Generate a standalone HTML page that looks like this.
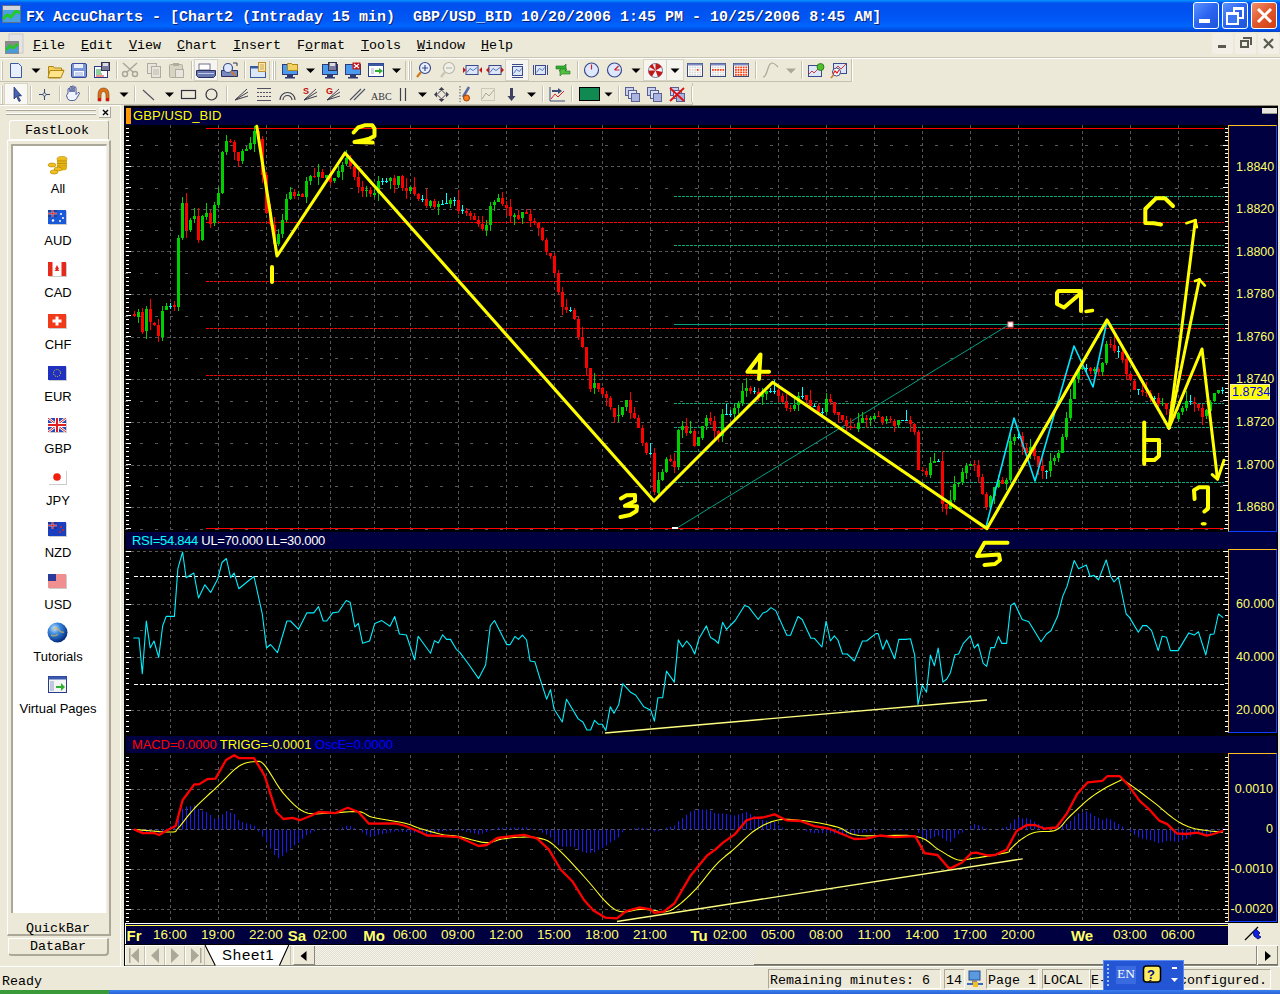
<!DOCTYPE html>
<html><head><meta charset="utf-8">
<style>
*{margin:0;padding:0;box-sizing:border-box}
html,body{width:1280px;height:994px;overflow:hidden;background:#ECE9D8;position:relative;font-family:"Liberation Sans",sans-serif}
.a{position:absolute}
.mono{font-family:"Liberation Mono",monospace}
#title{left:0;top:0;width:1280px;height:32px;background:linear-gradient(to bottom,#0997ff 0px,#0053ee 3px,#0050ee 6px,#0058f5 20px,#0066ff 26px,#0047d8 31px,#003dc8 32px)}
#ttext{left:26px;top:9px;color:#fff;font:bold 15px "Liberation Mono",monospace;white-space:pre;text-shadow:1px 1px 0 #0a1e6e;letter-spacing:0px}
.wbtn{top:2px;width:26px;height:27px;border:1px solid #fff;border-radius:3px;background:linear-gradient(135deg,#5b92ff 0%,#2a64f0 50%,#1f54d8 100%)}
.menu{top:38px;font:13.33px "Liberation Mono",monospace;color:#000;white-space:pre}
.menu u{text-decoration:underline}
.mdib{top:33px;width:21px;height:21px;background:#f1efe6;border-radius:2px}
.sep{width:1px;background:#c5c2b2;border-right:1px solid #fff}
.lbl{font:13px "Liberation Sans",sans-serif;color:#000;text-align:center;width:120px;left:-2px}
.status{font:13.33px "Liberation Mono",monospace;color:#000;white-space:pre;margin-top:2px}
.sbox{top:969px;height:20px;border-top:1px solid #aca899;border-left:1px solid #aca899;border-right:1px solid #fff;border-bottom:1px solid #fff}
.tl{font:13.5px "Liberation Sans",sans-serif;color:#ffff66;white-space:pre;top:927px}
.tlb{font:bold 15px "Liberation Sans",sans-serif;color:#ffff66;white-space:pre;top:927px}
.ax{font:12.5px "Liberation Sans",sans-serif;color:#ffff66;white-space:pre}
</style></head><body>
<!-- title bar -->
<div id="title" class="a"></div>
<svg class="a" style="left:2px;top:5px" width="20" height="19" viewBox="0 0 20 19">
 <rect x="0" y="0" width="19" height="18" fill="#5f6f8a"/>
 <rect x="1" y="5" width="17" height="12" fill="#4aa0e0"/>
 <polyline points="1,14 5,10 9,12 14,6 18,8" stroke="#22cc22" stroke-width="3" fill="none"/>
 <rect x="1" y="1" width="17" height="4" fill="#cfd6de"/>
</svg>
<div id="ttext" class="a">FX AccuCharts - [Chart2 (Intraday 15 min)  GBP/USD_BID 10/20/2006 1:45 PM - 10/25/2006 8:45 AM]</div>
<div class="a wbtn" style="left:1193px"><div class="a" style="left:5px;top:16px;width:11px;height:4px;background:#fff"></div></div>
<div class="a wbtn" style="left:1222px"><div class="a" style="left:10px;top:4px;width:11px;height:12px;border:2px solid #fff;border-top-width:3px"></div><div class="a" style="left:3px;top:9px;width:13px;height:13px;border:2px solid #fff;border-top-width:3px;background:#3d74f2"></div></div>
<div class="a wbtn" style="left:1251px;background:linear-gradient(135deg,#f0906c 0%,#e0572c 50%,#cf3d10 100%)">
 <svg class="a" style="left:3px;top:3px" width="19" height="19"><path d="M3,3 L16,16 M16,3 L3,16" stroke="#fff" stroke-width="3"/></svg></div>

<!-- menu bar -->
<svg class="a" style="left:4px;top:33px" width="21" height="22" viewBox="0 0 21 22">
 <rect x="5" y="1" width="14" height="19" fill="#e4e4e4" stroke="#c8c8c8"/>
 <rect x="1" y="8" width="14" height="13" fill="#8a8a8a"/>
 <rect x="2" y="13" width="12" height="7" fill="#4a9ad8"/>
 <polyline points="2,17 6,13 9,15 14,11" stroke="#30c030" stroke-width="3" fill="none"/>
</svg>
<div class="a menu" style="left:33px"><u>F</u>ile</div>
<div class="a menu" style="left:81px"><u>E</u>dit</div>
<div class="a menu" style="left:129px"><u>V</u>iew</div>
<div class="a menu" style="left:177px"><u>C</u>hart</div>
<div class="a menu" style="left:233px"><u>I</u>nsert</div>
<div class="a menu" style="left:297px">F<u>o</u>rmat</div>
<div class="a menu" style="left:361px"><u>T</u>ools</div>
<div class="a menu" style="left:417px"><u>W</u>indow</div>
<div class="a menu" style="left:481px"><u>H</u>elp</div>
<div class="a mdib" style="left:1212px"><div class="a" style="left:6px;top:12px;width:8px;height:3px;background:#5a5a50"></div></div>
<div class="a mdib" style="left:1235px"><div class="a" style="left:8px;top:4px;width:9px;height:8px;border:2px solid #5a5a50;border-width:2px 2px 0 0"></div><div class="a" style="left:5px;top:7px;width:9px;height:8px;border:2px solid #5a5a50"></div></div>
<div class="a mdib" style="left:1258px"><svg class="a" style="left:5px;top:5px" width="11" height="11"><path d="M1,1 L10,10 M10,1 L1,10" stroke="#5a5a50" stroke-width="2.2"/></svg></div>
<div class="a" style="left:0;top:57px;width:1280px;height:1px;background:#c8c5b5"></div>
<div class="a" style="left:0;top:58px;width:1280px;height:1px;background:#fff"></div>

<!-- toolbars -->
<div class="a" style="left:0;top:59px;width:852px;height:23px;background:#ECE9D8;border-bottom:1px solid #c4c1b0"></div>
<div class="a" style="left:0;top:83px;width:693px;height:22px;background:#ECE9D8;border-bottom:1px solid #c4c1b0"></div>
<svg class="a" style="left:0;top:0" width="1280" height="110"><defs><pattern id="chk" width="2" height="2" patternUnits="userSpaceOnUse"><rect width="1" height="1" fill="#fff"/><rect x="1" y="1" width="1" height="1" fill="#fff"/></pattern></defs><rect x="851" y="59" width="1" height="23" fill="#c4c1b0"/><rect x="852" y="59" width="1" height="23" fill="#fff"/>
<rect x="692" y="83" width="1" height="22" fill="#c4c1b0"/>
<rect x="1" y="61" width="1" height="19" fill="#fff"/><rect x="2" y="61" width="1" height="19" fill="#c5c2b2"/>
<rect x="1" y="85" width="1" height="19" fill="#fff"/><rect x="2" y="85" width="1" height="19" fill="#c5c2b2"/>
<path d="M10.5,63.5 h8 l3,3 v11 h-11 z" fill="#e8f0ff" stroke="#3a5aa0"/>
<path d="M31.5,68.5 h9 l-4.5,4.5 z" fill="#000"/>
<path d="M48.5,66.5 h5 l1,1.5 h7 v2 h2 l-3,8 h-12 z" fill="#f4d060" stroke="#b08818"/><path d="M50,70.5 h14 l-3,7 h-13 z" fill="#ffe48a" stroke="#b08818"/>
<rect x="71.5" y="63.5" width="15" height="14" rx="1.5" fill="#7a96d8" stroke="#3a4a9a"/><rect x="74" y="64" width="9" height="4" fill="#e8eef8"/><rect x="74" y="71" width="10" height="5" fill="#fff"/><path d="M75,73 h8 M75,75 h8" stroke="#7a96d8" stroke-width="0.8"/>
<rect x="94.5" y="66.5" width="13" height="11" fill="#fff" stroke="#2a3a8a"/><path d="M96,70 h6 M96,72 h5 M96,74 h6" stroke="#20a040" stroke-width="1"/><path d="M96,76 h8" stroke="#e02020"/><rect x="101.5" y="62.5" width="8" height="8" fill="#7a7aa0" stroke="#303050"/><rect x="103" y="63" width="5" height="3" fill="#ddd"/>
<rect x="116" y="61" width="1" height="18" fill="#c5c2b2"/><rect x="117" y="61" width="1" height="18" fill="#fff"/>
<g stroke="#aaa69a" stroke-width="1.5" fill="none"><circle cx="125" cy="74" r="2.5"/><circle cx="135" cy="74" r="2.5"/><path d="M127,72 L137,63 M133,72 L123,63"/></g>
<rect x="147.5" y="63.5" width="9" height="10" fill="#e8e6dc" stroke="#b0ada0"/><rect x="151.5" y="66.5" width="9" height="11" fill="#e8e6dc" stroke="#b0ada0"/><path d="M153,70 h6 M153,72 h6 M153,74 h6" stroke="#b0ada0" stroke-width="0.8"/>
<rect x="169.5" y="64.5" width="13" height="13" rx="1" fill="#d8d4c4" stroke="#b0ada0"/><rect x="173" y="63" width="6" height="3" fill="#b0ada0"/><rect x="175.5" y="69.5" width="8" height="8" fill="#e8e6dc" stroke="#b0ada0"/>
<rect x="191" y="61" width="1" height="18" fill="#c5c2b2"/><rect x="192" y="61" width="1" height="18" fill="#fff"/>
<rect x="194.5" y="59.5" width="23.0" height="21.0" fill="#f6f5f0" stroke="#d8d4c4" stroke-width="1"/>
<rect x="199" y="64" width="11" height="6" fill="#fff" stroke="#505070" stroke-width="0.8"/><path d="M196.5,70.5 h19 v5 l-2,2 h-15 l-2,-2 z" fill="#6a78b0" stroke="#2a3060"/><path d="M198,73.5 h16" stroke="#c0c8f0" stroke-width="1"/>
<path d="M221.5,70.5 h16 v6 h-16 z" fill="#7a8ac0" stroke="#2a3060"/><circle cx="228" cy="68" r="4.5" fill="#dde8ff" stroke="#3a4a8a" stroke-width="1.2"/><path d="M231,71 L235,76" stroke="#d07a20" stroke-width="2"/><path d="M233,63 h4 v3" stroke="#303050" stroke-width="1" fill="none"/>
<rect x="244" y="61" width="1" height="18" fill="#c5c2b2"/><rect x="245" y="61" width="1" height="18" fill="#fff"/>
<rect x="250.5" y="66.5" width="15" height="11" fill="#dbe6f8" stroke="#3a5aa0"/><rect x="250.5" y="66.5" width="15" height="2" fill="#3a5aa0"/><rect x="258.5" y="62.5" width="7" height="9" fill="#f8e8b0" stroke="#c09030"/><path d="M260,65 h4 M260,67 h4 M260,69 h4" stroke="#c09030" stroke-width="0.8"/>
<rect x="269" y="61" width="1" height="19" fill="#c5c2b2"/>
<rect x="272" y="61" width="1" height="19" fill="#fff"/><rect x="273" y="61" width="1" height="19" fill="#c5c2b2"/>
<rect x="274" y="61" width="1" height="19" fill="#fff"/><rect x="275" y="61" width="1" height="19" fill="#c5c2b2"/>
<rect x="282.5" y="64.5" width="15" height="10" fill="#4a9af0" stroke="#303a70"/><rect x="287" y="75" width="6" height="2" fill="#303a70"/><rect x="285" y="77" width="10" height="1.5" fill="#303a70"/>
<path d="M287.5,63.5 h4 l1,1 h5 v6 h-10 z" fill="#f4d060" stroke="#b08818"/>
<path d="M306.0,68.5 h9 l-4.5,4.5 z" fill="#000"/>
<rect x="322.5" y="64.5" width="15" height="10" fill="#4a9af0" stroke="#303a70"/><rect x="327" y="75" width="6" height="2" fill="#303a70"/><rect x="325" y="77" width="10" height="1.5" fill="#303a70"/>
<rect x="328.5" y="62.5" width="8" height="8" fill="#7a7aa0" stroke="#303050"/><rect x="330" y="63" width="5" height="3" fill="#ddd"/>
<rect x="345.5" y="64.5" width="15" height="10" fill="#4a9af0" stroke="#303a70"/><rect x="350" y="75" width="6" height="2" fill="#303a70"/><rect x="348" y="77" width="10" height="1.5" fill="#303a70"/>
<rect x="352.5" y="62.5" width="8" height="7" fill="#c01818"/><path d="M354,64 l5,4 M359,64 l-5,4" stroke="#fff" stroke-width="1.2"/>
<rect x="368.5" y="63.5" width="15" height="13" fill="#fff" stroke="#2a3a8a"/><rect x="368.5" y="63.5" width="15" height="2.5" fill="#3a5aa0"/><path d="M371,69 h3 M371,71 h3 M371,73 h3" stroke="#8a9ac0" stroke-width="0.8"/><path d="M375,70 h4 v-2 l4,3 l-4,3 v-2 h-4 z" fill="#30b030"/>
<path d="M392.0,68.5 h9 l-4.5,4.5 z" fill="#000"/>
<rect x="405" y="61" width="1" height="19" fill="#c5c2b2"/>
<rect x="408" y="61" width="1" height="19" fill="#fff"/><rect x="409" y="61" width="1" height="19" fill="#c5c2b2"/>
<rect x="410" y="61" width="1" height="19" fill="#fff"/><rect x="411" y="61" width="1" height="19" fill="#c5c2b2"/>
<circle cx="425" cy="68" r="5.5" fill="#e8f0ff" stroke="#3a4a8a" stroke-width="1.2"/><path d="M422,68 h6 M425,65 v6" stroke="#3a4a8a" stroke-width="1.2"/><path d="M421,72 L417,77" stroke="#d07a20" stroke-width="2.2"/>
<circle cx="449" cy="68" r="5.5" fill="#f0efe8" stroke="#b8b5a8" stroke-width="1.2"/><path d="M446,68 h6" stroke="#b8b5a8" stroke-width="1.2"/><path d="M445,72 L441,77" stroke="#c8c5b8" stroke-width="2.2"/>
<rect x="466" y="65.5" width="12" height="9" fill="#dce8fa" stroke="#3a4a8a"/><polyline points="467,72.5 470,68.5 473,70.5 477,67.5" fill="none" stroke="#4a6ab0" stroke-width="0.9"/>
<path d="M463,67 l3,3 l-3,3 z M482,67 l-3,3 l3,3 z" fill="#c01818"/>
<rect x="489" y="65.5" width="12" height="9" fill="#dce8fa" stroke="#3a4a8a"/><polyline points="490,72.5 493,68.5 496,70.5 500,67.5" fill="none" stroke="#4a6ab0" stroke-width="0.9"/>
<path d="M489,67 l-3,3 l3,3 z M501,67 l3,3 l-3,3 z" fill="#c01818"/>
<rect x="505.5" y="59.5" width="23.0" height="21.0" fill="#f6f5f0" stroke="#d8d4c4" stroke-width="1"/>
<rect x="512.5" y="66.5" width="10" height="9" fill="#dce8fa" stroke="#3a4a8a"/><polyline points="513.5,73.5 516.5,69.5 519.5,71.5 521.5,68.5" fill="none" stroke="#4a6ab0" stroke-width="0.9"/>
<path d="M512,64.5 h11 M512,77.5 h11" stroke="#3a4a8a" stroke-width="1"/>
<rect x="535.5" y="65.5" width="10" height="9" fill="#dce8fa" stroke="#3a4a8a"/><polyline points="536.5,72.5 539.5,68.5 542.5,70.5 544.5,67.5" fill="none" stroke="#4a6ab0" stroke-width="0.9"/>
<path d="M533.5,65 v10 M547.5,65 v10" stroke="#3a4a8a" stroke-width="1"/>
<path d="M556,66 h8 l2,-2 v7 h-7 l2,-2 h-5 z" fill="#30b030" stroke="#207020" stroke-width="0.6"/><path d="M570,74 h-8 l-2,2 v-7 h7 l-2,2 h5 z" fill="#50c040" stroke="#207020" stroke-width="0.6"/>
<rect x="577" y="61" width="1" height="18" fill="#c5c2b2"/><rect x="578" y="61" width="1" height="18" fill="#fff"/>
<circle cx="591.5" cy="70" r="7" fill="#dde8ff" stroke="#3a4a8a" stroke-width="1.2"/><path d="M591.5,64.5 v5" stroke="#d02020" stroke-width="1.2"/>
<circle cx="614.5" cy="70" r="7" fill="#dde8ff" stroke="#3a4a8a" stroke-width="1.2"/><path d="M614.5,70 l4,-4 M614.5,70 h5" stroke="#d02020" stroke-width="1.2"/>
<path d="M631.5,68.5 h9 l-4.5,4.5 z" fill="#000"/>
<rect x="643.5" y="59.5" width="23.0" height="21.0" fill="#f6f5f0" stroke="#d8d4c4" stroke-width="1"/>
<circle cx="655.5" cy="70.5" r="7" fill="#f0f0f8" stroke="#5a5a7a" stroke-width="0.8"/><path d="M655.5,70.5 L655.5,63.5 A7,7 0 0,1 661.6,67 Z M655.5,70.5 L662.5,72 A7,7 0 0,1 658,77 Z M655.5,70.5 L652,76.6 A7,7 0 0,1 648.5,70.5 Z M655.5,70.5 L649.4,67 A7,7 0 0,1 652.5,64 Z" fill="#c01818"/>
<rect x="666.5" y="59.5" width="17.0" height="21.0" fill="#f6f5f0" stroke="#d8d4c4" stroke-width="1"/>
<path d="M670.5,68.5 h9 l-4.5,4.5 z" fill="#000"/>
<rect x="687.5" y="63.5" width="15" height="13" fill="#fff" stroke="#3a4a7a"/><rect x="687.5" y="63.5" width="15" height="2" fill="#7a8ac0"/>
<rect x="689.0" y="66.5" width="1.8" height="1.8" fill="#d8d8d8"/>
<rect x="691.6" y="66.5" width="1.8" height="1.8" fill="#d8d8d8"/>
<rect x="694.2" y="66.5" width="1.8" height="1.8" fill="#d8d8d8"/>
<rect x="696.8" y="66.5" width="1.8" height="1.8" fill="#d8d8d8"/>
<rect x="699.4" y="66.5" width="1.8" height="1.8" fill="#d8d8d8"/>
<rect x="689.0" y="69.0" width="1.8" height="1.8" fill="#d8d8d8"/>
<rect x="691.6" y="69.0" width="1.8" height="1.8" fill="#d8d8d8"/>
<rect x="694.2" y="69.0" width="1.8" height="1.8" fill="#d8d8d8"/>
<rect x="696.8" y="69.0" width="1.8" height="1.8" fill="#ff4010"/>
<rect x="699.4" y="69.0" width="1.8" height="1.8" fill="#d8d8d8"/>
<rect x="689.0" y="71.5" width="1.8" height="1.8" fill="#d8d8d8"/>
<rect x="691.6" y="71.5" width="1.8" height="1.8" fill="#d8d8d8"/>
<rect x="694.2" y="71.5" width="1.8" height="1.8" fill="#d8d8d8"/>
<rect x="696.8" y="71.5" width="1.8" height="1.8" fill="#d8d8d8"/>
<rect x="699.4" y="71.5" width="1.8" height="1.8" fill="#d8d8d8"/>
<rect x="689.0" y="74.0" width="1.8" height="1.8" fill="#d8d8d8"/>
<rect x="691.6" y="74.0" width="1.8" height="1.8" fill="#d8d8d8"/>
<rect x="694.2" y="74.0" width="1.8" height="1.8" fill="#d8d8d8"/>
<rect x="696.8" y="74.0" width="1.8" height="1.8" fill="#d8d8d8"/>
<rect x="699.4" y="74.0" width="1.8" height="1.8" fill="#d8d8d8"/>
<rect x="710.5" y="63.5" width="15" height="13" fill="#fff" stroke="#3a4a7a"/><rect x="710.5" y="63.5" width="15" height="2" fill="#7a8ac0"/>
<rect x="712.0" y="66.5" width="1.8" height="1.8" fill="#d8d8d8"/>
<rect x="714.6" y="66.5" width="1.8" height="1.8" fill="#d8d8d8"/>
<rect x="717.2" y="66.5" width="1.8" height="1.8" fill="#d8d8d8"/>
<rect x="719.8" y="66.5" width="1.8" height="1.8" fill="#d8d8d8"/>
<rect x="722.4" y="66.5" width="1.8" height="1.8" fill="#d8d8d8"/>
<rect x="712.0" y="69.0" width="1.8" height="1.8" fill="#ff4010"/>
<rect x="714.6" y="69.0" width="1.8" height="1.8" fill="#ff4010"/>
<rect x="717.2" y="69.0" width="1.8" height="1.8" fill="#ff4010"/>
<rect x="719.8" y="69.0" width="1.8" height="1.8" fill="#ff4010"/>
<rect x="722.4" y="69.0" width="1.8" height="1.8" fill="#ff4010"/>
<rect x="712.0" y="71.5" width="1.8" height="1.8" fill="#d8d8d8"/>
<rect x="714.6" y="71.5" width="1.8" height="1.8" fill="#d8d8d8"/>
<rect x="717.2" y="71.5" width="1.8" height="1.8" fill="#d8d8d8"/>
<rect x="719.8" y="71.5" width="1.8" height="1.8" fill="#d8d8d8"/>
<rect x="722.4" y="71.5" width="1.8" height="1.8" fill="#d8d8d8"/>
<rect x="712.0" y="74.0" width="1.8" height="1.8" fill="#d8d8d8"/>
<rect x="714.6" y="74.0" width="1.8" height="1.8" fill="#d8d8d8"/>
<rect x="717.2" y="74.0" width="1.8" height="1.8" fill="#d8d8d8"/>
<rect x="719.8" y="74.0" width="1.8" height="1.8" fill="#d8d8d8"/>
<rect x="722.4" y="74.0" width="1.8" height="1.8" fill="#d8d8d8"/>
<rect x="733.5" y="63.5" width="15" height="13" fill="#fff" stroke="#3a4a7a"/><rect x="733.5" y="63.5" width="15" height="2" fill="#7a8ac0"/>
<rect x="735.0" y="66.5" width="1.8" height="1.8" fill="#ff4010"/>
<rect x="737.6" y="66.5" width="1.8" height="1.8" fill="#ff4010"/>
<rect x="740.2" y="66.5" width="1.8" height="1.8" fill="#ff4010"/>
<rect x="742.8" y="66.5" width="1.8" height="1.8" fill="#ff4010"/>
<rect x="745.4" y="66.5" width="1.8" height="1.8" fill="#ff4010"/>
<rect x="735.0" y="69.0" width="1.8" height="1.8" fill="#ff4010"/>
<rect x="737.6" y="69.0" width="1.8" height="1.8" fill="#ff4010"/>
<rect x="740.2" y="69.0" width="1.8" height="1.8" fill="#ff4010"/>
<rect x="742.8" y="69.0" width="1.8" height="1.8" fill="#ff4010"/>
<rect x="745.4" y="69.0" width="1.8" height="1.8" fill="#ff4010"/>
<rect x="735.0" y="71.5" width="1.8" height="1.8" fill="#ff4010"/>
<rect x="737.6" y="71.5" width="1.8" height="1.8" fill="#ff4010"/>
<rect x="740.2" y="71.5" width="1.8" height="1.8" fill="#ff4010"/>
<rect x="742.8" y="71.5" width="1.8" height="1.8" fill="#ff4010"/>
<rect x="745.4" y="71.5" width="1.8" height="1.8" fill="#ff4010"/>
<rect x="735.0" y="74.0" width="1.8" height="1.8" fill="#ff4010"/>
<rect x="737.6" y="74.0" width="1.8" height="1.8" fill="#ff4010"/>
<rect x="740.2" y="74.0" width="1.8" height="1.8" fill="#ff4010"/>
<rect x="742.8" y="74.0" width="1.8" height="1.8" fill="#ff4010"/>
<rect x="745.4" y="74.0" width="1.8" height="1.8" fill="#ff4010"/>
<rect x="755" y="61" width="1" height="18" fill="#c5c2b2"/><rect x="756" y="61" width="1" height="18" fill="#fff"/>
<path d="M763,77 C768,77 767,63 772,63 C775,63 777,66 778,67" stroke="#aaa69a" stroke-width="1.2" fill="none"/>
<path d="M786.0,68.5 h10 l-5.0,5.0 z" fill="#aca899"/>
<rect x="801" y="61" width="1" height="18" fill="#c5c2b2"/><rect x="802" y="61" width="1" height="18" fill="#fff"/>
<rect x="808.5" y="65.5" width="13" height="11" fill="#dce8fa" stroke="#3a4a8a"/><polyline points="809,74 812,71 814,73 818,69" fill="none" stroke="#e02020" stroke-width="0.9"/><circle cx="820.5" cy="67" r="3.5" fill="#50c030" stroke="#207010" stroke-width="0.8"/>
<rect x="833.5" y="63.5" width="13" height="10" fill="#dce8fa" stroke="#3a4a8a"/><polyline points="834,70 838,66 841,69 846,64" fill="none" stroke="#e02020" stroke-width="0.9"/><circle cx="836.5" cy="72" r="4" fill="#fff" stroke="#3a4a8a" stroke-width="1"/><path d="M833,74 l2,-3 l2,2 l2,-3" stroke="#e02020" stroke-width="1.2" fill="none"/><path d="M833.5,75 L831,78" stroke="#d07a20" stroke-width="1.5"/>
<rect x="4.5" y="83.5" width="23.0" height="21.0" fill="#f6f5f0" stroke="#d8d4c4" stroke-width="1"/>
<rect x="5" y="84" width="22" height="20" fill="url(#chk)" opacity="0.6"/>
<path d="M14,87 v12 l2.5,-2.5 l2.5,5 l1.5,-0.8 l-2.5,-4.8 h3.5 z" fill="#4a60b0" stroke="#1a2a60" stroke-width="0.7"/>
<rect x="30" y="86" width="1" height="16" fill="#c5c2b2"/><rect x="31" y="86" width="1" height="16" fill="#fff"/>
<path d="M39,94.5 h11 M44.5,89 v11" stroke="#3a4a7a" stroke-width="1.1"/><circle cx="44.5" cy="94.5" r="1.6" fill="#ECE9D8" stroke="#3a4a7a" stroke-width="0.8"/>
<rect x="59" y="86" width="1" height="16" fill="#c5c2b2"/><rect x="60" y="86" width="1" height="16" fill="#fff"/>
<path d="M68,93 v-4 q1,-1.5 2,0 v3 v-5 q1,-1.5 2,0 v5 v-5.5 q1,-1.5 2,0 v5.5 v-4.5 q1,-1.5 2,0 v7 l2,-2 q1.5,-0.5 1.5,1 l-3,5 q-1,2 -3,2 h-3 q-2,0 -3,-2 l-1,-3 z" fill="#f0f4ff" stroke="#3a4a8a" stroke-width="0.9"/>
<rect x="88" y="86" width="1" height="16" fill="#c5c2b2"/><rect x="89" y="86" width="1" height="16" fill="#fff"/>
<path d="M98,101 v-6 q0,-7 5.5,-7 q5.5,0 5.5,7 v6 h-3 v-6 q0,-3.5 -2.5,-3.5 q-2.5,0 -2.5,3.5 v6 z" fill="#e07010" stroke="#704010" stroke-width="0.6"/><rect x="98" y="98" width="3" height="3" fill="#e01010"/><rect x="106" y="98" width="3" height="3" fill="#e01010"/>
<path d="M119.5,92.5 h9 l-4.5,4.5 z" fill="#000"/>
<rect x="134" y="86" width="1" height="16" fill="#c5c2b2"/><rect x="135" y="86" width="1" height="16" fill="#fff"/>
<path d="M143,90 L154,100" stroke="#505060" stroke-width="1.1"/>
<path d="M165.0,92.5 h9 l-4.5,4.5 z" fill="#000"/>
<rect x="181.5" y="90.5" width="14" height="8" fill="none" stroke="#303040" stroke-width="1.2"/>
<circle cx="211.5" cy="94.5" r="5.5" fill="none" stroke="#303040" stroke-width="1.2"/>
<rect x="226" y="86" width="1" height="16" fill="#c5c2b2"/><rect x="227" y="86" width="1" height="16" fill="#fff"/>
<path d="M235,100 L247,89 M235,100 L248,92 M235,100 L248,96" stroke="#404050" stroke-width="1"/>
<path d="M257,88.5 h14 M257,92.5 h14 M257,96.5 h14 M257,100.5 h14" stroke="#505060" stroke-width="1" stroke-dasharray="2,1"/><path d="M257,88.5 h14 M257,100.5 h14" stroke="#505060" stroke-width="1"/>
<path d="M280,100 A7.5,7.5 0 0,1 295,100 M283,100 A4.5,4.5 0 0,1 292,100" stroke="#404050" stroke-width="1.2" fill="none"/>
<path d="M304,100 L316,89 M304,100 L317,92 M304,100 L317,96" stroke="#404050" stroke-width="1"/>
<text x="303" y="94" font-family="Liberation Sans" font-weight="bold" font-size="9" fill="#c01010">S</text>
<path d="M327,100 L339,89 M327,100 L340,92 M327,100 L340,96" stroke="#404050" stroke-width="1"/>
<text x="326" y="94" font-family="Liberation Sans" font-weight="bold" font-size="9" fill="#c01010">G</text>
<path d="M350,100 L361,89 M354,100 L365,89" stroke="#505060" stroke-width="1.1"/>
<text x="371" y="100" font-family="Liberation Serif" font-size="10" fill="#303040">ABC</text>
<path d="M400.5,88 v13 M405.5,88 v13" stroke="#404050" stroke-width="1.2"/>
<path d="M418.0,92.5 h9 l-4.5,4.5 z" fill="#000"/>
<path d="M441.5,87 l3,3 h-6 z M441.5,102 l3,-3 h-6 z M434,94.5 l3,-3 v6 z M449,94.5 l-3,-3 v6 z" fill="#404050"/><path d="M441.5,90 l4.5,4.5 l-4.5,4.5 l-4.5,-4.5 z" fill="none" stroke="#404050"/>
<path d="M460,86 v16" stroke="#505060" stroke-dasharray="1.5,1.5"/><path d="M469,87 L463,97" stroke="#5a6aa0" stroke-width="2.5"/><circle cx="466.5" cy="98" r="3" fill="#ff8020" stroke="#a04000"/>
<rect x="481.5" y="88.5" width="13" height="12" fill="none" stroke="#aca899" stroke-dasharray="1,1"/><polyline points="482,99 486,93 489,96 494,90" fill="none" stroke="#aca899"/>
<path d="M510,88 v8 h-2.5 l4,5 l4,-5 h-2.5 v-8 z" fill="#404060"/>
<path d="M527.0,92.5 h9 l-4.5,4.5 z" fill="#000"/>
<rect x="542" y="86" width="1" height="16" fill="#c5c2b2"/><rect x="543" y="86" width="1" height="16" fill="#fff"/>
<path d="M550,87 v14 h15" stroke="#3a4a7a" stroke-width="1" fill="none"/><polyline points="551,99 555,94 558,97 564,91" fill="none" stroke="#e02020" stroke-width="1"/><path d="M552,90 h6 v-2 l4,3 l-4,3 v-2 h-6 z" fill="#3a4a7a"/>
<rect x="571" y="86" width="1" height="16" fill="#c5c2b2"/><rect x="572" y="86" width="1" height="16" fill="#fff"/>
<rect x="579.5" y="87.5" width="20" height="13" fill="#108a50" stroke="#000" stroke-width="1"/>
<path d="M604.5,92.5 h8 l-4.0,4.0 z" fill="#000"/>
<rect x="618" y="86" width="1" height="16" fill="#c5c2b2"/><rect x="619" y="86" width="1" height="16" fill="#fff"/>
<rect x="625.5" y="87.5" width="8" height="8" fill="#c8d0f0" stroke="#5a6090"/><rect x="628.5" y="90.5" width="8" height="8" fill="#dde4fa" stroke="#5a6090"/><rect x="631.5" y="93.5" width="8" height="8" fill="#aab4e0" stroke="#5a6090"/>
<rect x="647.5" y="87.5" width="8" height="8" fill="#c8d0f0" stroke="#5a6090"/><rect x="650.5" y="90.5" width="8" height="8" fill="#dde4fa" stroke="#5a6090"/><rect x="653.5" y="93.5" width="8" height="8" fill="#aab4e0" stroke="#5a6090"/>
<rect x="670.5" y="87.5" width="8" height="8" fill="#c8d0f0" stroke="#5a6090"/><rect x="673.5" y="90.5" width="8" height="8" fill="#dde4fa" stroke="#5a6090"/><rect x="676.5" y="93.5" width="8" height="8" fill="#aab4e0" stroke="#5a6090"/>
<path d="M670,88 L684,101 M684,88 L670,101" stroke="#e01010" stroke-width="1.8"/>
<rect x="691" y="86" width="1" height="16" fill="#c5c2b2"/><rect x="692" y="86" width="1" height="16" fill="#fff"/></svg>

<!-- left panel -->
<div class="a" style="left:0;top:105px;width:121px;height:861px;background:#ECE9D8;border-top:1px solid #fff"></div>
<div class="a" style="left:6px;top:109px;width:90px;height:2px;background:#fff;border-bottom:1px solid #aca899"></div>
<div class="a" style="left:6px;top:113px;width:90px;height:2px;background:#fff;border-bottom:1px solid #aca899"></div>
<div class="a" style="left:99px;top:107px;width:12px;height:11px;background:#f4f3ee;border-right:1px solid #aca899;border-bottom:1px solid #aca899"></div>
<svg class="a" style="left:102px;top:109px" width="7" height="7"><path d="M1,1 L6,6 M6,1 L1,6" stroke="#000" stroke-width="1.4"/></svg>
<div class="a" style="left:9px;top:120px;width:100px;height:20px;border:1px solid #fff;border-right:1px solid #aca899;border-radius:3px 3px 0 0;background:#ECE9D8"></div>
<div class="a mono" style="left:25px;top:123px;font-size:13.33px;color:#000">FastLook</div>
<div class="a" style="left:7px;top:140px;width:104px;height:796px;border:1px solid #fff;border-right:2px solid #aca899;border-bottom:2px solid #aca899;background:#ECE9D8"></div>
<div class="a" style="left:11px;top:144px;width:96px;height:769px;background:#fff;border-left:2px solid #aca899;border-top:2px solid #aca899;border-right:1px solid #f0f0f0"></div>
<div class="a mono" style="left:26px;top:921px;font-size:13.33px;color:#000">QuickBar</div>
<div class="a" style="left:8px;top:938px;width:101px;height:18px;border:1px solid #fff;border-right:2px solid #aca899;border-bottom:2px solid #aca899;border-radius:0 0 4px 4px;background:#ECE9D8"></div>
<div class="a mono" style="left:30px;top:939px;font-size:13.33px;color:#000">DataBar</div>
<div class="a" style="left:120px;top:105px;width:4px;height:861px;background:#ECE9D8;border-left:1px solid #fff"></div>
<div class="a lbl" style="top:181px">All</div>
<div class="a lbl" style="top:233px">AUD</div>
<div class="a lbl" style="top:285px">CAD</div>
<div class="a lbl" style="top:337px">CHF</div>
<div class="a lbl" style="top:389px">EUR</div>
<div class="a lbl" style="top:441px">GBP</div>
<div class="a lbl" style="top:493px">JPY</div>
<div class="a lbl" style="top:545px">NZD</div>
<div class="a lbl" style="top:597px">USD</div>
<div class="a lbl" style="top:649px">Tutorials</div>
<div class="a lbl" style="top:701px">Virtual Pages</div>
<svg class="a" style="left:47px;top:155px" width="22" height="20" viewBox="0 0 22 20"><ellipse cx="15" cy="4" rx="5" ry="2.5" fill="#f0c020" stroke="#b08000" stroke-width="0.6"/><rect x="10" y="4" width="10" height="9" fill="#e8b818"/><path d="M10,6 h10 M10,8.5 h10 M10,11 h10" stroke="#b08000" stroke-width="0.7"/><ellipse cx="15" cy="13" rx="5" ry="2.5" fill="#e0b010"/><ellipse cx="5" cy="10" rx="4" ry="2" fill="#f0c020" stroke="#b08000" stroke-width="0.6"/><ellipse cx="11" cy="14" rx="4" ry="2" fill="#f0c020" stroke="#b08000" stroke-width="0.6"/><ellipse cx="7" cy="17" rx="4" ry="2" fill="#f0c020" stroke="#b08000" stroke-width="0.6"/></svg>
<svg class="a" style="left:48px;top:210px" width="19" height="15" viewBox="0 0 19 15"><rect x="1" y="1" width="18" height="14" fill="#999" opacity="0.5"/><rect x="0" y="0" width="18" height="14" fill="#1a5ad8"/><rect x="0" y="0" width="9" height="7" fill="#2040a0"/><path d="M0,3.5 h9 M4.5,0 v7" stroke="#fff" stroke-width="1.5"/><path d="M0,3.5 h9 M4.5,0 v7" stroke="#e02020" stroke-width="0.8"/><circle cx="5" cy="10.5" r="1.2" fill="#fff"/><circle cx="13" cy="4" r="1" fill="#fff"/><circle cx="15" cy="8" r="1" fill="#fff"/><circle cx="12" cy="11" r="1" fill="#fff"/></svg>
<svg class="a" style="left:48px;top:262px" width="19" height="15" viewBox="0 0 19 15"><rect x="1" y="1" width="18" height="14" fill="#999" opacity="0.5"/><rect x="0" y="0" width="18" height="14" fill="#fff"/><rect x="0" y="0" width="4.5" height="14" fill="#e52a1a"/><rect x="13.5" y="0" width="4.5" height="14" fill="#e52a1a"/><path d="M9,3 L11,7 L10,7.5 L11.5,9 L9,9 L9,11 L9,9 L6.5,9 L8,7.5 L7,7 Z" fill="#e52a1a"/></svg>
<svg class="a" style="left:48px;top:314px" width="19" height="15" viewBox="0 0 19 15"><rect x="1" y="1" width="18" height="14" fill="#999" opacity="0.5"/><rect x="0" y="0" width="18" height="14" fill="#f03a1a"/><rect x="7.5" y="2.5" width="3" height="9" fill="#fff"/><rect x="4.5" y="5.5" width="9" height="3" fill="#fff"/></svg>
<svg class="a" style="left:48px;top:366px" width="19" height="15" viewBox="0 0 19 15"><rect x="1" y="1" width="18" height="14" fill="#999" opacity="0.5"/><rect x="0" y="0" width="18" height="14" fill="#2030c0"/><circle cx="9" cy="7" r="3.5" fill="none" stroke="#ffee00" stroke-width="0.9" stroke-dasharray="1,1.2"/></svg>
<svg class="a" style="left:48px;top:418px" width="19" height="15" viewBox="0 0 19 15"><rect x="1" y="1" width="18" height="14" fill="#999" opacity="0.5"/><rect x="0" y="0" width="18" height="14" fill="#2a4ab8"/><path d="M0,0 L18,14 M18,0 L0,14" stroke="#fff" stroke-width="2.5"/><path d="M0,0 L18,14 M18,0 L0,14" stroke="#e02020" stroke-width="1"/><path d="M9,0 v14 M0,7 h18" stroke="#fff" stroke-width="4"/><path d="M9,0 v14 M0,7 h18" stroke="#e02020" stroke-width="2"/></svg>
<svg class="a" style="left:48px;top:470px" width="19" height="15" viewBox="0 0 19 15"><rect x="1" y="1" width="18" height="14" fill="#999" opacity="0.5"/><rect x="0" y="0" width="18" height="14" fill="#fff"/><circle cx="9" cy="7" r="3.8" fill="#f02010"/></svg>
<svg class="a" style="left:48px;top:522px" width="19" height="15" viewBox="0 0 19 15"><rect x="1" y="1" width="18" height="14" fill="#999" opacity="0.5"/><rect x="0" y="0" width="18" height="14" fill="#1a40c0"/><rect x="0" y="0" width="9" height="7" fill="#2030a0"/><path d="M0,3.5 h9 M4.5,0 v7" stroke="#fff" stroke-width="1.5"/><path d="M0,3.5 h9 M4.5,0 v7" stroke="#e02020" stroke-width="0.8"/><circle cx="13" cy="5" r="1" fill="#e02020"/><circle cx="15" cy="8" r="1" fill="#e02020"/><circle cx="12" cy="10" r="1" fill="#e02020"/></svg>
<svg class="a" style="left:48px;top:574px" width="19" height="15" viewBox="0 0 19 15"><rect x="1" y="1" width="18" height="14" fill="#999" opacity="0.5"/><rect x="0" y="0" width="18" height="14" fill="#fff"/><path d="M0,1 h18 M0,3 h18 M0,5 h18 M0,7 h18 M0,9 h18 M0,11 h18 M0,13 h18" stroke="#e02020" stroke-width="1"/><rect x="0" y="0" width="8" height="7" fill="#2a3a9a"/></svg>
<svg class="a" style="left:47px;top:622px" width="21" height="21" viewBox="0 0 21 21"><defs><radialGradient id="gl" cx="0.35" cy="0.3" r="0.8"><stop offset="0" stop-color="#cfe8ff"/><stop offset="0.35" stop-color="#3a8ae0"/><stop offset="0.8" stop-color="#0a3a90"/><stop offset="1" stop-color="#062060"/></radialGradient></defs><circle cx="10.5" cy="10.5" r="10" fill="url(#gl)"/><path d="M6,8 q3,-4 6,0 q2,3 5,2 M4,13 q4,2 7,-1" stroke="#d0b060" stroke-width="1.5" fill="none" opacity="0.7"/></svg>
<svg class="a" style="left:48px;top:676px" width="19" height="18" viewBox="0 0 19 18"><rect x="0.5" y="0.5" width="18" height="16" fill="#f4f4f4" stroke="#2a3a8a"/><rect x="0.5" y="0.5" width="18" height="3" fill="#3a5ab0"/><rect x="2" y="5" width="4" height="10" fill="#c0c8e0"/><path d="M8,10 h5 v-3 l4,4 l-4,4 v-3 h-5 z" fill="#30b030"/></svg>

<!-- chart window -->
<div class="a" style="left:124px;top:105px;width:1154px;height:1px;background:#8e8b7c"></div><div class="a" style="left:124px;top:106px;width:1154px;height:839px;background:#000"></div>
<div class="a" style="left:125px;top:108px;width:1152px;height:17px;background:#000040"></div>
<div class="a" style="left:126px;top:108px;width:5px;height:16px;background:#ff9900"></div>
<div class="a" style="left:133px;top:108px;font:13px 'Liberation Sans',sans-serif;color:#ffff00;letter-spacing:0.1px">GBP/USD_BID</div>
<div class="a" style="left:1262px;top:108px;width:15px;height:6px;background:#e8e6dc;border-bottom:1px solid #9a9888"></div>
<div class="a" style="left:126px;top:532px;width:1151px;height:17px;background:#000040"></div>
<div class="a" style="left:132px;top:533px;font:13px 'Liberation Sans',sans-serif;color:#00ffff;white-space:pre;letter-spacing:-0.3px">RSI=54.844 <span style="color:#fff">UL=70.000 LL=30.000</span></div>
<div class="a" style="left:126px;top:736px;width:1151px;height:17px;background:#000040"></div>
<div class="a" style="left:132px;top:737px;font:13px 'Liberation Sans',sans-serif;color:#ff0000;white-space:pre;letter-spacing:-0.1px">MACD=0.0000 <span style="color:#ffff00">TRIGG=-0.0001</span> <span style="color:#0000ff">OscE=0.0000</span></div>
<!-- axis boxes -->
<div class="a" style="left:1228px;top:125px;width:49px;height:407px;background:#000040;border-left:1px solid #ffc020;border-top:1px solid #ffc020;border-right:1px solid #1040ff;border-bottom:1px solid #1040ff"></div>
<div class="a" style="left:1228px;top:549px;width:49px;height:184px;background:#000040;border-left:1px solid #ffc020;border-top:1px solid #ffc020;border-right:1px solid #1040ff;border-bottom:1px solid #1040ff"></div>
<div class="a" style="left:1228px;top:753px;width:49px;height:169px;background:#000040;border-left:1px solid #ffc020;border-top:1px solid #ffc020;border-right:1px solid #1040ff;border-bottom:1px solid #1040ff"></div>
<div class="a ax" style="left:1236px;top:160px">1.8840</div>
<div class="a ax" style="left:1236px;top:202px">1.8820</div>
<div class="a ax" style="left:1236px;top:245px">1.8800</div>
<div class="a ax" style="left:1236px;top:287px">1.8780</div>
<div class="a ax" style="left:1236px;top:330px">1.8760</div>
<div class="a ax" style="left:1236px;top:372px">1.8740</div>
<div class="a ax" style="left:1236px;top:415px">1.8720</div>
<div class="a ax" style="left:1236px;top:458px">1.8700</div>
<div class="a ax" style="left:1236px;top:500px">1.8680</div>
<div class="a" style="left:1230px;top:384px;width:40px;height:16px;background:#ffff00;border:1px solid #f4f0b0"></div>
<div class="a ax" style="left:1232px;top:385px;color:#0000f0;font-size:12.5px">1.8734</div>
<div class="a ax" style="left:1236px;top:597px">60.000</div>
<div class="a ax" style="left:1236px;top:650px">40.000</div>
<div class="a ax" style="left:1236px;top:703px">20.000</div>
<div class="a ax" style="right:7px;top:782px">0.0010</div>
<div class="a ax" style="right:7px;top:822px">0</div>
<div class="a ax" style="right:7px;top:862px">-0.0010</div>
<div class="a ax" style="right:7px;top:902px">-0.0020</div>
<!-- time axis -->
<div class="a" style="left:125px;top:923px;width:1103px;height:21px;background:#000040;border-top:1px solid #ffffff;border-left:1px solid #fff"></div><div class="a" style="left:125px;top:925px;width:1103px;height:1px;background:#ffff40"></div>
<div class="a" style="left:1228px;top:923px;width:50px;height:22px;background:#ECE9D8"></div>
<svg class="a" style="left:1243px;top:925px" width="24" height="18"><path d="M2,15 L15,2" stroke="#000" stroke-width="1.2"/><path d="M10,7 L13,4 L17,8 L15,10 L18,12 L15,14 L11,11 Z" fill="#1020e0" stroke="#000060" stroke-width="0.8"/></svg>
<div class="a tlb" style="left:94px;width:80px;text-align:center">Fr</div>
<div class="a tl" style="left:130px;width:80px;text-align:center">16:00</div>
<div class="a tl" style="left:178px;width:80px;text-align:center">19:00</div>
<div class="a tl" style="left:226px;width:80px;text-align:center">22:00</div>
<div class="a tlb" style="left:257px;width:80px;text-align:center">Sa</div>
<div class="a tl" style="left:290px;width:80px;text-align:center">02:00</div>
<div class="a tlb" style="left:334px;width:80px;text-align:center">Mo</div>
<div class="a tl" style="left:370px;width:80px;text-align:center">06:00</div>
<div class="a tl" style="left:418px;width:80px;text-align:center">09:00</div>
<div class="a tl" style="left:466px;width:80px;text-align:center">12:00</div>
<div class="a tl" style="left:514px;width:80px;text-align:center">15:00</div>
<div class="a tl" style="left:562px;width:80px;text-align:center">18:00</div>
<div class="a tl" style="left:610px;width:80px;text-align:center">21:00</div>
<div class="a tlb" style="left:659px;width:80px;text-align:center">Tu</div>
<div class="a tl" style="left:690px;width:80px;text-align:center">02:00</div>
<div class="a tl" style="left:738px;width:80px;text-align:center">05:00</div>
<div class="a tl" style="left:786px;width:80px;text-align:center">08:00</div>
<div class="a tl" style="left:834px;width:80px;text-align:center">11:00</div>
<div class="a tl" style="left:882px;width:80px;text-align:center">14:00</div>
<div class="a tl" style="left:930px;width:80px;text-align:center">17:00</div>
<div class="a tl" style="left:978px;width:80px;text-align:center">20:00</div>
<div class="a tlb" style="left:1042px;width:80px;text-align:center">We</div>
<div class="a tl" style="left:1090px;width:80px;text-align:center">03:00</div>
<div class="a tl" style="left:1138px;width:80px;text-align:center">06:00</div>
<svg class="a" style="left:0;top:0" width="1280" height="994">
<rect x="124" y="125" width="1104" height="407" fill="#000"/>
<rect x="124" y="549" width="1104" height="186" fill="#000"/>
<rect x="124" y="753" width="1104" height="170" fill="#000"/>
<g shape-rendering="crispEdges">
<line x1="170.5" y1="125" x2="170.5" y2="532" stroke="#575757" stroke-width="1" stroke-dasharray="3,3"/>
<line x1="218.5" y1="125" x2="218.5" y2="532" stroke="#575757" stroke-width="1" stroke-dasharray="3,3"/>
<line x1="266.5" y1="125" x2="266.5" y2="532" stroke="#575757" stroke-width="1" stroke-dasharray="3,3"/>
<line x1="298.5" y1="125" x2="298.5" y2="532" stroke="#575757" stroke-width="1" stroke-dasharray="3,3"/>
<line x1="330.5" y1="125" x2="330.5" y2="532" stroke="#575757" stroke-width="1" stroke-dasharray="3,3"/>
<line x1="374.5" y1="125" x2="374.5" y2="532" stroke="#575757" stroke-width="1" stroke-dasharray="3,3"/>
<line x1="410.5" y1="125" x2="410.5" y2="532" stroke="#575757" stroke-width="1" stroke-dasharray="3,3"/>
<line x1="458.5" y1="125" x2="458.5" y2="532" stroke="#575757" stroke-width="1" stroke-dasharray="3,3"/>
<line x1="506.5" y1="125" x2="506.5" y2="532" stroke="#575757" stroke-width="1" stroke-dasharray="3,3"/>
<line x1="554.5" y1="125" x2="554.5" y2="532" stroke="#575757" stroke-width="1" stroke-dasharray="3,3"/>
<line x1="602.5" y1="125" x2="602.5" y2="532" stroke="#575757" stroke-width="1" stroke-dasharray="3,3"/>
<line x1="650.5" y1="125" x2="650.5" y2="532" stroke="#575757" stroke-width="1" stroke-dasharray="3,3"/>
<line x1="698.5" y1="125" x2="698.5" y2="532" stroke="#575757" stroke-width="1" stroke-dasharray="3,3"/>
<line x1="730.5" y1="125" x2="730.5" y2="532" stroke="#575757" stroke-width="1" stroke-dasharray="3,3"/>
<line x1="778.5" y1="125" x2="778.5" y2="532" stroke="#575757" stroke-width="1" stroke-dasharray="3,3"/>
<line x1="826.5" y1="125" x2="826.5" y2="532" stroke="#575757" stroke-width="1" stroke-dasharray="3,3"/>
<line x1="874.5" y1="125" x2="874.5" y2="532" stroke="#575757" stroke-width="1" stroke-dasharray="3,3"/>
<line x1="922.5" y1="125" x2="922.5" y2="532" stroke="#575757" stroke-width="1" stroke-dasharray="3,3"/>
<line x1="970.5" y1="125" x2="970.5" y2="532" stroke="#575757" stroke-width="1" stroke-dasharray="3,3"/>
<line x1="1018.5" y1="125" x2="1018.5" y2="532" stroke="#575757" stroke-width="1" stroke-dasharray="3,3"/>
<line x1="1082.5" y1="125" x2="1082.5" y2="532" stroke="#575757" stroke-width="1" stroke-dasharray="3,3"/>
<line x1="1130.5" y1="125" x2="1130.5" y2="532" stroke="#575757" stroke-width="1" stroke-dasharray="3,3"/>
<line x1="1178.5" y1="125" x2="1178.5" y2="532" stroke="#575757" stroke-width="1" stroke-dasharray="3,3"/>
<line x1="125" y1="166.5" x2="1225" y2="166.5" stroke="#575757" stroke-width="1" stroke-dasharray="3,3"/>
<line x1="125" y1="209.5" x2="1225" y2="209.5" stroke="#575757" stroke-width="1" stroke-dasharray="3,3"/>
<line x1="125" y1="251.5" x2="1225" y2="251.5" stroke="#575757" stroke-width="1" stroke-dasharray="3,3"/>
<line x1="125" y1="294.5" x2="1225" y2="294.5" stroke="#575757" stroke-width="1" stroke-dasharray="3,3"/>
<line x1="125" y1="337.5" x2="1225" y2="337.5" stroke="#575757" stroke-width="1" stroke-dasharray="3,3"/>
<line x1="125" y1="379.5" x2="1225" y2="379.5" stroke="#575757" stroke-width="1" stroke-dasharray="3,3"/>
<line x1="125" y1="422.5" x2="1225" y2="422.5" stroke="#575757" stroke-width="1" stroke-dasharray="3,3"/>
<line x1="125" y1="465.5" x2="1225" y2="465.5" stroke="#575757" stroke-width="1" stroke-dasharray="3,3"/>
<line x1="125" y1="507.5" x2="1225" y2="507.5" stroke="#575757" stroke-width="1" stroke-dasharray="3,3"/>
<line x1="125" y1="145.5" x2="1225" y2="145.5" stroke="#575757" stroke-width="1" stroke-dasharray="3,12"/>
<line x1="125" y1="188.5" x2="1225" y2="188.5" stroke="#575757" stroke-width="1" stroke-dasharray="3,12"/>
<line x1="125" y1="230.5" x2="1225" y2="230.5" stroke="#575757" stroke-width="1" stroke-dasharray="3,12"/>
<line x1="125" y1="273.5" x2="1225" y2="273.5" stroke="#575757" stroke-width="1" stroke-dasharray="3,12"/>
<line x1="125" y1="316.5" x2="1225" y2="316.5" stroke="#575757" stroke-width="1" stroke-dasharray="3,12"/>
<line x1="125" y1="358.5" x2="1225" y2="358.5" stroke="#575757" stroke-width="1" stroke-dasharray="3,12"/>
<line x1="125" y1="401.5" x2="1225" y2="401.5" stroke="#575757" stroke-width="1" stroke-dasharray="3,12"/>
<line x1="125" y1="443.5" x2="1225" y2="443.5" stroke="#575757" stroke-width="1" stroke-dasharray="3,12"/>
<line x1="125" y1="486.5" x2="1225" y2="486.5" stroke="#575757" stroke-width="1" stroke-dasharray="3,12"/>
<line x1="125" y1="529.5" x2="1225" y2="529.5" stroke="#575757" stroke-width="1" stroke-dasharray="3,12"/>
</g>
<g shape-rendering="crispEdges">
<line x1="170.5" y1="551" x2="170.5" y2="735" stroke="#575757" stroke-width="1" stroke-dasharray="3,3"/>
<line x1="218.5" y1="551" x2="218.5" y2="735" stroke="#575757" stroke-width="1" stroke-dasharray="3,3"/>
<line x1="266.5" y1="551" x2="266.5" y2="735" stroke="#575757" stroke-width="1" stroke-dasharray="3,3"/>
<line x1="298.5" y1="551" x2="298.5" y2="735" stroke="#575757" stroke-width="1" stroke-dasharray="3,3"/>
<line x1="330.5" y1="551" x2="330.5" y2="735" stroke="#575757" stroke-width="1" stroke-dasharray="3,3"/>
<line x1="374.5" y1="551" x2="374.5" y2="735" stroke="#575757" stroke-width="1" stroke-dasharray="3,3"/>
<line x1="410.5" y1="551" x2="410.5" y2="735" stroke="#575757" stroke-width="1" stroke-dasharray="3,3"/>
<line x1="458.5" y1="551" x2="458.5" y2="735" stroke="#575757" stroke-width="1" stroke-dasharray="3,3"/>
<line x1="506.5" y1="551" x2="506.5" y2="735" stroke="#575757" stroke-width="1" stroke-dasharray="3,3"/>
<line x1="554.5" y1="551" x2="554.5" y2="735" stroke="#575757" stroke-width="1" stroke-dasharray="3,3"/>
<line x1="602.5" y1="551" x2="602.5" y2="735" stroke="#575757" stroke-width="1" stroke-dasharray="3,3"/>
<line x1="650.5" y1="551" x2="650.5" y2="735" stroke="#575757" stroke-width="1" stroke-dasharray="3,3"/>
<line x1="698.5" y1="551" x2="698.5" y2="735" stroke="#575757" stroke-width="1" stroke-dasharray="3,3"/>
<line x1="730.5" y1="551" x2="730.5" y2="735" stroke="#575757" stroke-width="1" stroke-dasharray="3,3"/>
<line x1="778.5" y1="551" x2="778.5" y2="735" stroke="#575757" stroke-width="1" stroke-dasharray="3,3"/>
<line x1="826.5" y1="551" x2="826.5" y2="735" stroke="#575757" stroke-width="1" stroke-dasharray="3,3"/>
<line x1="874.5" y1="551" x2="874.5" y2="735" stroke="#575757" stroke-width="1" stroke-dasharray="3,3"/>
<line x1="922.5" y1="551" x2="922.5" y2="735" stroke="#575757" stroke-width="1" stroke-dasharray="3,3"/>
<line x1="970.5" y1="551" x2="970.5" y2="735" stroke="#575757" stroke-width="1" stroke-dasharray="3,3"/>
<line x1="1018.5" y1="551" x2="1018.5" y2="735" stroke="#575757" stroke-width="1" stroke-dasharray="3,3"/>
<line x1="1082.5" y1="551" x2="1082.5" y2="735" stroke="#575757" stroke-width="1" stroke-dasharray="3,3"/>
<line x1="1130.5" y1="551" x2="1130.5" y2="735" stroke="#575757" stroke-width="1" stroke-dasharray="3,3"/>
<line x1="1178.5" y1="551" x2="1178.5" y2="735" stroke="#575757" stroke-width="1" stroke-dasharray="3,3"/>
<line x1="125" y1="551.5" x2="1225" y2="551.5" stroke="#575757" stroke-width="1" stroke-dasharray="3,3"/>
<line x1="125" y1="604.5" x2="1225" y2="604.5" stroke="#575757" stroke-width="1" stroke-dasharray="3,3"/>
<line x1="125" y1="657.5" x2="1225" y2="657.5" stroke="#575757" stroke-width="1" stroke-dasharray="3,3"/>
<line x1="125" y1="710.5" x2="1225" y2="710.5" stroke="#575757" stroke-width="1" stroke-dasharray="3,3"/>
<line x1="125" y1="630.5" x2="1225" y2="630.5" stroke="#575757" stroke-width="1" stroke-dasharray="3,12"/>
</g>
<g shape-rendering="crispEdges">
<line x1="170.5" y1="755" x2="170.5" y2="923" stroke="#575757" stroke-width="1" stroke-dasharray="3,3"/>
<line x1="218.5" y1="755" x2="218.5" y2="923" stroke="#575757" stroke-width="1" stroke-dasharray="3,3"/>
<line x1="266.5" y1="755" x2="266.5" y2="923" stroke="#575757" stroke-width="1" stroke-dasharray="3,3"/>
<line x1="298.5" y1="755" x2="298.5" y2="923" stroke="#575757" stroke-width="1" stroke-dasharray="3,3"/>
<line x1="330.5" y1="755" x2="330.5" y2="923" stroke="#575757" stroke-width="1" stroke-dasharray="3,3"/>
<line x1="374.5" y1="755" x2="374.5" y2="923" stroke="#575757" stroke-width="1" stroke-dasharray="3,3"/>
<line x1="410.5" y1="755" x2="410.5" y2="923" stroke="#575757" stroke-width="1" stroke-dasharray="3,3"/>
<line x1="458.5" y1="755" x2="458.5" y2="923" stroke="#575757" stroke-width="1" stroke-dasharray="3,3"/>
<line x1="506.5" y1="755" x2="506.5" y2="923" stroke="#575757" stroke-width="1" stroke-dasharray="3,3"/>
<line x1="554.5" y1="755" x2="554.5" y2="923" stroke="#575757" stroke-width="1" stroke-dasharray="3,3"/>
<line x1="602.5" y1="755" x2="602.5" y2="923" stroke="#575757" stroke-width="1" stroke-dasharray="3,3"/>
<line x1="650.5" y1="755" x2="650.5" y2="923" stroke="#575757" stroke-width="1" stroke-dasharray="3,3"/>
<line x1="698.5" y1="755" x2="698.5" y2="923" stroke="#575757" stroke-width="1" stroke-dasharray="3,3"/>
<line x1="730.5" y1="755" x2="730.5" y2="923" stroke="#575757" stroke-width="1" stroke-dasharray="3,3"/>
<line x1="778.5" y1="755" x2="778.5" y2="923" stroke="#575757" stroke-width="1" stroke-dasharray="3,3"/>
<line x1="826.5" y1="755" x2="826.5" y2="923" stroke="#575757" stroke-width="1" stroke-dasharray="3,3"/>
<line x1="874.5" y1="755" x2="874.5" y2="923" stroke="#575757" stroke-width="1" stroke-dasharray="3,3"/>
<line x1="922.5" y1="755" x2="922.5" y2="923" stroke="#575757" stroke-width="1" stroke-dasharray="3,3"/>
<line x1="970.5" y1="755" x2="970.5" y2="923" stroke="#575757" stroke-width="1" stroke-dasharray="3,3"/>
<line x1="1018.5" y1="755" x2="1018.5" y2="923" stroke="#575757" stroke-width="1" stroke-dasharray="3,3"/>
<line x1="1082.5" y1="755" x2="1082.5" y2="923" stroke="#575757" stroke-width="1" stroke-dasharray="3,3"/>
<line x1="1130.5" y1="755" x2="1130.5" y2="923" stroke="#575757" stroke-width="1" stroke-dasharray="3,3"/>
<line x1="1178.5" y1="755" x2="1178.5" y2="923" stroke="#575757" stroke-width="1" stroke-dasharray="3,3"/>
<line x1="125" y1="789.5" x2="1225" y2="789.5" stroke="#575757" stroke-width="1" stroke-dasharray="3,3"/>
<line x1="125" y1="829.5" x2="1225" y2="829.5" stroke="#575757" stroke-width="1" stroke-dasharray="3,3"/>
<line x1="125" y1="869.5" x2="1225" y2="869.5" stroke="#575757" stroke-width="1" stroke-dasharray="3,3"/>
<line x1="125" y1="909.5" x2="1225" y2="909.5" stroke="#575757" stroke-width="1" stroke-dasharray="3,3"/>
<line x1="125" y1="769.5" x2="1225" y2="769.5" stroke="#575757" stroke-width="1" stroke-dasharray="3,12"/>
<line x1="125" y1="809.5" x2="1225" y2="809.5" stroke="#575757" stroke-width="1" stroke-dasharray="3,12"/>
<line x1="125" y1="849.5" x2="1225" y2="849.5" stroke="#575757" stroke-width="1" stroke-dasharray="3,12"/>
<line x1="125" y1="889.5" x2="1225" y2="889.5" stroke="#575757" stroke-width="1" stroke-dasharray="3,12"/>
</g>
<rect x="126" y="128" width="3" height="1" fill="#fff"/>
<rect x="1225" y="128" width="3" height="1" fill="#fff"/>
<rect x="126" y="132" width="3" height="1" fill="#fff"/>
<rect x="1225" y="132" width="3" height="1" fill="#fff"/>
<rect x="126" y="136" width="3" height="1" fill="#fff"/>
<rect x="1225" y="136" width="3" height="1" fill="#fff"/>
<rect x="126" y="140" width="3" height="1" fill="#fff"/>
<rect x="1225" y="140" width="3" height="1" fill="#fff"/>
<rect x="126" y="145" width="5" height="1" fill="#fff"/>
<rect x="1223" y="145" width="5" height="1" fill="#fff"/>
<rect x="126" y="149" width="3" height="1" fill="#fff"/>
<rect x="1225" y="149" width="3" height="1" fill="#fff"/>
<rect x="126" y="153" width="3" height="1" fill="#fff"/>
<rect x="1225" y="153" width="3" height="1" fill="#fff"/>
<rect x="126" y="157" width="3" height="1" fill="#fff"/>
<rect x="1225" y="157" width="3" height="1" fill="#fff"/>
<rect x="126" y="162" width="3" height="1" fill="#fff"/>
<rect x="1225" y="162" width="3" height="1" fill="#fff"/>
<rect x="126" y="166" width="5" height="1" fill="#fff"/>
<rect x="1223" y="166" width="5" height="1" fill="#fff"/>
<rect x="126" y="170" width="3" height="1" fill="#fff"/>
<rect x="1225" y="170" width="3" height="1" fill="#fff"/>
<rect x="126" y="175" width="3" height="1" fill="#fff"/>
<rect x="1225" y="175" width="3" height="1" fill="#fff"/>
<rect x="126" y="179" width="3" height="1" fill="#fff"/>
<rect x="1225" y="179" width="3" height="1" fill="#fff"/>
<rect x="126" y="183" width="3" height="1" fill="#fff"/>
<rect x="1225" y="183" width="3" height="1" fill="#fff"/>
<rect x="126" y="187" width="5" height="1" fill="#fff"/>
<rect x="1223" y="187" width="5" height="1" fill="#fff"/>
<rect x="126" y="192" width="3" height="1" fill="#fff"/>
<rect x="1225" y="192" width="3" height="1" fill="#fff"/>
<rect x="126" y="196" width="3" height="1" fill="#fff"/>
<rect x="1225" y="196" width="3" height="1" fill="#fff"/>
<rect x="126" y="200" width="3" height="1" fill="#fff"/>
<rect x="1225" y="200" width="3" height="1" fill="#fff"/>
<rect x="126" y="204" width="3" height="1" fill="#fff"/>
<rect x="1225" y="204" width="3" height="1" fill="#fff"/>
<rect x="126" y="209" width="5" height="1" fill="#fff"/>
<rect x="1223" y="209" width="5" height="1" fill="#fff"/>
<rect x="126" y="213" width="3" height="1" fill="#fff"/>
<rect x="1225" y="213" width="3" height="1" fill="#fff"/>
<rect x="126" y="217" width="3" height="1" fill="#fff"/>
<rect x="1225" y="217" width="3" height="1" fill="#fff"/>
<rect x="126" y="221" width="3" height="1" fill="#fff"/>
<rect x="1225" y="221" width="3" height="1" fill="#fff"/>
<rect x="126" y="226" width="3" height="1" fill="#fff"/>
<rect x="1225" y="226" width="3" height="1" fill="#fff"/>
<rect x="126" y="230" width="5" height="1" fill="#fff"/>
<rect x="1223" y="230" width="5" height="1" fill="#fff"/>
<rect x="126" y="234" width="3" height="1" fill="#fff"/>
<rect x="1225" y="234" width="3" height="1" fill="#fff"/>
<rect x="126" y="238" width="3" height="1" fill="#fff"/>
<rect x="1225" y="238" width="3" height="1" fill="#fff"/>
<rect x="126" y="243" width="3" height="1" fill="#fff"/>
<rect x="1225" y="243" width="3" height="1" fill="#fff"/>
<rect x="126" y="247" width="3" height="1" fill="#fff"/>
<rect x="1225" y="247" width="3" height="1" fill="#fff"/>
<rect x="126" y="251" width="5" height="1" fill="#fff"/>
<rect x="1223" y="251" width="5" height="1" fill="#fff"/>
<rect x="126" y="255" width="3" height="1" fill="#fff"/>
<rect x="1225" y="255" width="3" height="1" fill="#fff"/>
<rect x="126" y="260" width="3" height="1" fill="#fff"/>
<rect x="1225" y="260" width="3" height="1" fill="#fff"/>
<rect x="126" y="264" width="3" height="1" fill="#fff"/>
<rect x="1225" y="264" width="3" height="1" fill="#fff"/>
<rect x="126" y="268" width="3" height="1" fill="#fff"/>
<rect x="1225" y="268" width="3" height="1" fill="#fff"/>
<rect x="126" y="272" width="5" height="1" fill="#fff"/>
<rect x="1223" y="272" width="5" height="1" fill="#fff"/>
<rect x="126" y="277" width="3" height="1" fill="#fff"/>
<rect x="1225" y="277" width="3" height="1" fill="#fff"/>
<rect x="126" y="281" width="3" height="1" fill="#fff"/>
<rect x="1225" y="281" width="3" height="1" fill="#fff"/>
<rect x="126" y="285" width="3" height="1" fill="#fff"/>
<rect x="1225" y="285" width="3" height="1" fill="#fff"/>
<rect x="126" y="290" width="3" height="1" fill="#fff"/>
<rect x="1225" y="290" width="3" height="1" fill="#fff"/>
<rect x="126" y="294" width="5" height="1" fill="#fff"/>
<rect x="1223" y="294" width="5" height="1" fill="#fff"/>
<rect x="126" y="298" width="3" height="1" fill="#fff"/>
<rect x="1225" y="298" width="3" height="1" fill="#fff"/>
<rect x="126" y="302" width="3" height="1" fill="#fff"/>
<rect x="1225" y="302" width="3" height="1" fill="#fff"/>
<rect x="126" y="307" width="3" height="1" fill="#fff"/>
<rect x="1225" y="307" width="3" height="1" fill="#fff"/>
<rect x="126" y="311" width="3" height="1" fill="#fff"/>
<rect x="1225" y="311" width="3" height="1" fill="#fff"/>
<rect x="126" y="315" width="5" height="1" fill="#fff"/>
<rect x="1223" y="315" width="5" height="1" fill="#fff"/>
<rect x="126" y="319" width="3" height="1" fill="#fff"/>
<rect x="1225" y="319" width="3" height="1" fill="#fff"/>
<rect x="126" y="324" width="3" height="1" fill="#fff"/>
<rect x="1225" y="324" width="3" height="1" fill="#fff"/>
<rect x="126" y="328" width="3" height="1" fill="#fff"/>
<rect x="1225" y="328" width="3" height="1" fill="#fff"/>
<rect x="126" y="332" width="3" height="1" fill="#fff"/>
<rect x="1225" y="332" width="3" height="1" fill="#fff"/>
<rect x="126" y="336" width="5" height="1" fill="#fff"/>
<rect x="1223" y="336" width="5" height="1" fill="#fff"/>
<rect x="126" y="341" width="3" height="1" fill="#fff"/>
<rect x="1225" y="341" width="3" height="1" fill="#fff"/>
<rect x="126" y="345" width="3" height="1" fill="#fff"/>
<rect x="1225" y="345" width="3" height="1" fill="#fff"/>
<rect x="126" y="349" width="3" height="1" fill="#fff"/>
<rect x="1225" y="349" width="3" height="1" fill="#fff"/>
<rect x="126" y="353" width="3" height="1" fill="#fff"/>
<rect x="1225" y="353" width="3" height="1" fill="#fff"/>
<rect x="126" y="358" width="5" height="1" fill="#fff"/>
<rect x="1223" y="358" width="5" height="1" fill="#fff"/>
<rect x="126" y="362" width="3" height="1" fill="#fff"/>
<rect x="1225" y="362" width="3" height="1" fill="#fff"/>
<rect x="126" y="366" width="3" height="1" fill="#fff"/>
<rect x="1225" y="366" width="3" height="1" fill="#fff"/>
<rect x="126" y="370" width="3" height="1" fill="#fff"/>
<rect x="1225" y="370" width="3" height="1" fill="#fff"/>
<rect x="126" y="375" width="3" height="1" fill="#fff"/>
<rect x="1225" y="375" width="3" height="1" fill="#fff"/>
<rect x="126" y="379" width="5" height="1" fill="#fff"/>
<rect x="1223" y="379" width="5" height="1" fill="#fff"/>
<rect x="126" y="383" width="3" height="1" fill="#fff"/>
<rect x="1225" y="383" width="3" height="1" fill="#fff"/>
<rect x="126" y="388" width="3" height="1" fill="#fff"/>
<rect x="1225" y="388" width="3" height="1" fill="#fff"/>
<rect x="126" y="392" width="3" height="1" fill="#fff"/>
<rect x="1225" y="392" width="3" height="1" fill="#fff"/>
<rect x="126" y="396" width="3" height="1" fill="#fff"/>
<rect x="1225" y="396" width="3" height="1" fill="#fff"/>
<rect x="126" y="400" width="5" height="1" fill="#fff"/>
<rect x="1223" y="400" width="5" height="1" fill="#fff"/>
<rect x="126" y="405" width="3" height="1" fill="#fff"/>
<rect x="1225" y="405" width="3" height="1" fill="#fff"/>
<rect x="126" y="409" width="3" height="1" fill="#fff"/>
<rect x="1225" y="409" width="3" height="1" fill="#fff"/>
<rect x="126" y="413" width="3" height="1" fill="#fff"/>
<rect x="1225" y="413" width="3" height="1" fill="#fff"/>
<rect x="126" y="417" width="3" height="1" fill="#fff"/>
<rect x="1225" y="417" width="3" height="1" fill="#fff"/>
<rect x="126" y="422" width="5" height="1" fill="#fff"/>
<rect x="1223" y="422" width="5" height="1" fill="#fff"/>
<rect x="126" y="426" width="3" height="1" fill="#fff"/>
<rect x="1225" y="426" width="3" height="1" fill="#fff"/>
<rect x="126" y="430" width="3" height="1" fill="#fff"/>
<rect x="1225" y="430" width="3" height="1" fill="#fff"/>
<rect x="126" y="434" width="3" height="1" fill="#fff"/>
<rect x="1225" y="434" width="3" height="1" fill="#fff"/>
<rect x="126" y="439" width="3" height="1" fill="#fff"/>
<rect x="1225" y="439" width="3" height="1" fill="#fff"/>
<rect x="126" y="443" width="5" height="1" fill="#fff"/>
<rect x="1223" y="443" width="5" height="1" fill="#fff"/>
<rect x="126" y="447" width="3" height="1" fill="#fff"/>
<rect x="1225" y="447" width="3" height="1" fill="#fff"/>
<rect x="126" y="451" width="3" height="1" fill="#fff"/>
<rect x="1225" y="451" width="3" height="1" fill="#fff"/>
<rect x="126" y="456" width="3" height="1" fill="#fff"/>
<rect x="1225" y="456" width="3" height="1" fill="#fff"/>
<rect x="126" y="460" width="3" height="1" fill="#fff"/>
<rect x="1225" y="460" width="3" height="1" fill="#fff"/>
<rect x="126" y="464" width="5" height="1" fill="#fff"/>
<rect x="1223" y="464" width="5" height="1" fill="#fff"/>
<rect x="126" y="468" width="3" height="1" fill="#fff"/>
<rect x="1225" y="468" width="3" height="1" fill="#fff"/>
<rect x="126" y="473" width="3" height="1" fill="#fff"/>
<rect x="1225" y="473" width="3" height="1" fill="#fff"/>
<rect x="126" y="477" width="3" height="1" fill="#fff"/>
<rect x="1225" y="477" width="3" height="1" fill="#fff"/>
<rect x="126" y="481" width="3" height="1" fill="#fff"/>
<rect x="1225" y="481" width="3" height="1" fill="#fff"/>
<rect x="126" y="485" width="5" height="1" fill="#fff"/>
<rect x="1223" y="485" width="5" height="1" fill="#fff"/>
<rect x="126" y="490" width="3" height="1" fill="#fff"/>
<rect x="1225" y="490" width="3" height="1" fill="#fff"/>
<rect x="126" y="494" width="3" height="1" fill="#fff"/>
<rect x="1225" y="494" width="3" height="1" fill="#fff"/>
<rect x="126" y="498" width="3" height="1" fill="#fff"/>
<rect x="1225" y="498" width="3" height="1" fill="#fff"/>
<rect x="126" y="503" width="3" height="1" fill="#fff"/>
<rect x="1225" y="503" width="3" height="1" fill="#fff"/>
<rect x="126" y="507" width="5" height="1" fill="#fff"/>
<rect x="1223" y="507" width="5" height="1" fill="#fff"/>
<rect x="126" y="511" width="3" height="1" fill="#fff"/>
<rect x="1225" y="511" width="3" height="1" fill="#fff"/>
<rect x="126" y="515" width="3" height="1" fill="#fff"/>
<rect x="1225" y="515" width="3" height="1" fill="#fff"/>
<rect x="126" y="520" width="3" height="1" fill="#fff"/>
<rect x="1225" y="520" width="3" height="1" fill="#fff"/>
<rect x="126" y="524" width="3" height="1" fill="#fff"/>
<rect x="1225" y="524" width="3" height="1" fill="#fff"/>
<rect x="126" y="528" width="5" height="1" fill="#fff"/>
<rect x="1223" y="528" width="5" height="1" fill="#fff"/>
<rect x="126" y="551" width="5" height="1" fill="#fff"/>
<rect x="1223" y="551" width="5" height="1" fill="#fff"/>
<rect x="126" y="556" width="3" height="1" fill="#fff"/>
<rect x="1225" y="556" width="3" height="1" fill="#fff"/>
<rect x="126" y="562" width="3" height="1" fill="#fff"/>
<rect x="1225" y="562" width="3" height="1" fill="#fff"/>
<rect x="126" y="567" width="3" height="1" fill="#fff"/>
<rect x="1225" y="567" width="3" height="1" fill="#fff"/>
<rect x="126" y="572" width="3" height="1" fill="#fff"/>
<rect x="1225" y="572" width="3" height="1" fill="#fff"/>
<rect x="126" y="578" width="3" height="1" fill="#fff"/>
<rect x="1225" y="578" width="3" height="1" fill="#fff"/>
<rect x="126" y="583" width="3" height="1" fill="#fff"/>
<rect x="1225" y="583" width="3" height="1" fill="#fff"/>
<rect x="126" y="588" width="3" height="1" fill="#fff"/>
<rect x="1225" y="588" width="3" height="1" fill="#fff"/>
<rect x="126" y="593" width="3" height="1" fill="#fff"/>
<rect x="1225" y="593" width="3" height="1" fill="#fff"/>
<rect x="126" y="599" width="3" height="1" fill="#fff"/>
<rect x="1225" y="599" width="3" height="1" fill="#fff"/>
<rect x="126" y="604" width="5" height="1" fill="#fff"/>
<rect x="1223" y="604" width="5" height="1" fill="#fff"/>
<rect x="126" y="609" width="3" height="1" fill="#fff"/>
<rect x="1225" y="609" width="3" height="1" fill="#fff"/>
<rect x="126" y="615" width="3" height="1" fill="#fff"/>
<rect x="1225" y="615" width="3" height="1" fill="#fff"/>
<rect x="126" y="620" width="3" height="1" fill="#fff"/>
<rect x="1225" y="620" width="3" height="1" fill="#fff"/>
<rect x="126" y="625" width="3" height="1" fill="#fff"/>
<rect x="1225" y="625" width="3" height="1" fill="#fff"/>
<rect x="126" y="630" width="3" height="1" fill="#fff"/>
<rect x="1225" y="630" width="3" height="1" fill="#fff"/>
<rect x="126" y="636" width="3" height="1" fill="#fff"/>
<rect x="1225" y="636" width="3" height="1" fill="#fff"/>
<rect x="126" y="641" width="3" height="1" fill="#fff"/>
<rect x="1225" y="641" width="3" height="1" fill="#fff"/>
<rect x="126" y="646" width="3" height="1" fill="#fff"/>
<rect x="1225" y="646" width="3" height="1" fill="#fff"/>
<rect x="126" y="652" width="3" height="1" fill="#fff"/>
<rect x="1225" y="652" width="3" height="1" fill="#fff"/>
<rect x="126" y="657" width="5" height="1" fill="#fff"/>
<rect x="1223" y="657" width="5" height="1" fill="#fff"/>
<rect x="126" y="662" width="3" height="1" fill="#fff"/>
<rect x="1225" y="662" width="3" height="1" fill="#fff"/>
<rect x="126" y="668" width="3" height="1" fill="#fff"/>
<rect x="1225" y="668" width="3" height="1" fill="#fff"/>
<rect x="126" y="673" width="3" height="1" fill="#fff"/>
<rect x="1225" y="673" width="3" height="1" fill="#fff"/>
<rect x="126" y="678" width="3" height="1" fill="#fff"/>
<rect x="1225" y="678" width="3" height="1" fill="#fff"/>
<rect x="126" y="683" width="3" height="1" fill="#fff"/>
<rect x="1225" y="683" width="3" height="1" fill="#fff"/>
<rect x="126" y="689" width="3" height="1" fill="#fff"/>
<rect x="1225" y="689" width="3" height="1" fill="#fff"/>
<rect x="126" y="694" width="3" height="1" fill="#fff"/>
<rect x="1225" y="694" width="3" height="1" fill="#fff"/>
<rect x="126" y="699" width="3" height="1" fill="#fff"/>
<rect x="1225" y="699" width="3" height="1" fill="#fff"/>
<rect x="126" y="705" width="3" height="1" fill="#fff"/>
<rect x="1225" y="705" width="3" height="1" fill="#fff"/>
<rect x="126" y="710" width="5" height="1" fill="#fff"/>
<rect x="1223" y="710" width="5" height="1" fill="#fff"/>
<rect x="126" y="715" width="3" height="1" fill="#fff"/>
<rect x="1225" y="715" width="3" height="1" fill="#fff"/>
<rect x="126" y="721" width="3" height="1" fill="#fff"/>
<rect x="1225" y="721" width="3" height="1" fill="#fff"/>
<rect x="126" y="726" width="3" height="1" fill="#fff"/>
<rect x="1225" y="726" width="3" height="1" fill="#fff"/>
<rect x="126" y="731" width="3" height="1" fill="#fff"/>
<rect x="1225" y="731" width="3" height="1" fill="#fff"/>
<rect x="126" y="757" width="3" height="1" fill="#fff"/>
<rect x="1225" y="757" width="3" height="1" fill="#fff"/>
<rect x="126" y="761" width="3" height="1" fill="#fff"/>
<rect x="1225" y="761" width="3" height="1" fill="#fff"/>
<rect x="126" y="765" width="3" height="1" fill="#fff"/>
<rect x="1225" y="765" width="3" height="1" fill="#fff"/>
<rect x="126" y="769" width="3" height="1" fill="#fff"/>
<rect x="1225" y="769" width="3" height="1" fill="#fff"/>
<rect x="126" y="773" width="3" height="1" fill="#fff"/>
<rect x="1225" y="773" width="3" height="1" fill="#fff"/>
<rect x="126" y="777" width="3" height="1" fill="#fff"/>
<rect x="1225" y="777" width="3" height="1" fill="#fff"/>
<rect x="126" y="781" width="3" height="1" fill="#fff"/>
<rect x="1225" y="781" width="3" height="1" fill="#fff"/>
<rect x="126" y="785" width="3" height="1" fill="#fff"/>
<rect x="1225" y="785" width="3" height="1" fill="#fff"/>
<rect x="126" y="789" width="5" height="1" fill="#fff"/>
<rect x="1223" y="789" width="5" height="1" fill="#fff"/>
<rect x="126" y="793" width="3" height="1" fill="#fff"/>
<rect x="1225" y="793" width="3" height="1" fill="#fff"/>
<rect x="126" y="797" width="3" height="1" fill="#fff"/>
<rect x="1225" y="797" width="3" height="1" fill="#fff"/>
<rect x="126" y="801" width="3" height="1" fill="#fff"/>
<rect x="1225" y="801" width="3" height="1" fill="#fff"/>
<rect x="126" y="805" width="3" height="1" fill="#fff"/>
<rect x="1225" y="805" width="3" height="1" fill="#fff"/>
<rect x="126" y="809" width="3" height="1" fill="#fff"/>
<rect x="1225" y="809" width="3" height="1" fill="#fff"/>
<rect x="126" y="813" width="3" height="1" fill="#fff"/>
<rect x="1225" y="813" width="3" height="1" fill="#fff"/>
<rect x="126" y="817" width="3" height="1" fill="#fff"/>
<rect x="1225" y="817" width="3" height="1" fill="#fff"/>
<rect x="126" y="821" width="3" height="1" fill="#fff"/>
<rect x="1225" y="821" width="3" height="1" fill="#fff"/>
<rect x="126" y="825" width="3" height="1" fill="#fff"/>
<rect x="1225" y="825" width="3" height="1" fill="#fff"/>
<rect x="126" y="829" width="5" height="1" fill="#fff"/>
<rect x="1223" y="829" width="5" height="1" fill="#fff"/>
<rect x="126" y="833" width="3" height="1" fill="#fff"/>
<rect x="1225" y="833" width="3" height="1" fill="#fff"/>
<rect x="126" y="837" width="3" height="1" fill="#fff"/>
<rect x="1225" y="837" width="3" height="1" fill="#fff"/>
<rect x="126" y="841" width="3" height="1" fill="#fff"/>
<rect x="1225" y="841" width="3" height="1" fill="#fff"/>
<rect x="126" y="845" width="3" height="1" fill="#fff"/>
<rect x="1225" y="845" width="3" height="1" fill="#fff"/>
<rect x="126" y="849" width="3" height="1" fill="#fff"/>
<rect x="1225" y="849" width="3" height="1" fill="#fff"/>
<rect x="126" y="853" width="3" height="1" fill="#fff"/>
<rect x="1225" y="853" width="3" height="1" fill="#fff"/>
<rect x="126" y="857" width="3" height="1" fill="#fff"/>
<rect x="1225" y="857" width="3" height="1" fill="#fff"/>
<rect x="126" y="861" width="3" height="1" fill="#fff"/>
<rect x="1225" y="861" width="3" height="1" fill="#fff"/>
<rect x="126" y="865" width="3" height="1" fill="#fff"/>
<rect x="1225" y="865" width="3" height="1" fill="#fff"/>
<rect x="126" y="869" width="5" height="1" fill="#fff"/>
<rect x="1223" y="869" width="5" height="1" fill="#fff"/>
<rect x="126" y="873" width="3" height="1" fill="#fff"/>
<rect x="1225" y="873" width="3" height="1" fill="#fff"/>
<rect x="126" y="877" width="3" height="1" fill="#fff"/>
<rect x="1225" y="877" width="3" height="1" fill="#fff"/>
<rect x="126" y="881" width="3" height="1" fill="#fff"/>
<rect x="1225" y="881" width="3" height="1" fill="#fff"/>
<rect x="126" y="885" width="3" height="1" fill="#fff"/>
<rect x="1225" y="885" width="3" height="1" fill="#fff"/>
<rect x="126" y="889" width="3" height="1" fill="#fff"/>
<rect x="1225" y="889" width="3" height="1" fill="#fff"/>
<rect x="126" y="893" width="3" height="1" fill="#fff"/>
<rect x="1225" y="893" width="3" height="1" fill="#fff"/>
<rect x="126" y="897" width="3" height="1" fill="#fff"/>
<rect x="1225" y="897" width="3" height="1" fill="#fff"/>
<rect x="126" y="901" width="3" height="1" fill="#fff"/>
<rect x="1225" y="901" width="3" height="1" fill="#fff"/>
<rect x="126" y="905" width="3" height="1" fill="#fff"/>
<rect x="1225" y="905" width="3" height="1" fill="#fff"/>
<rect x="126" y="909" width="5" height="1" fill="#fff"/>
<rect x="1223" y="909" width="5" height="1" fill="#fff"/>
<rect x="126" y="913" width="3" height="1" fill="#fff"/>
<rect x="1225" y="913" width="3" height="1" fill="#fff"/>
<rect x="126" y="917" width="3" height="1" fill="#fff"/>
<rect x="1225" y="917" width="3" height="1" fill="#fff"/>
<rect x="126" y="921" width="3" height="1" fill="#fff"/>
<rect x="1225" y="921" width="3" height="1" fill="#fff"/>
<line x1="206" y1="128.5" x2="1224" y2="128.5" stroke="#ff0000" stroke-width="1"/>
<line x1="206" y1="528.5" x2="1224" y2="528.5" stroke="#ff0000" stroke-width="1"/>
<g shape-rendering="crispEdges">
<line x1="206" y1="222.5" x2="1224" y2="222.5" stroke="#ff0000" stroke-width="1" stroke-dasharray="3,1"/>
<line x1="206" y1="281.5" x2="1224" y2="281.5" stroke="#ff0000" stroke-width="1" stroke-dasharray="3,1"/>
<line x1="206" y1="328.5" x2="1224" y2="328.5" stroke="#ff0000" stroke-width="1" stroke-dasharray="3,1"/>
<line x1="206" y1="375.5" x2="1224" y2="375.5" stroke="#ff0000" stroke-width="1" stroke-dasharray="3,1"/>
<line x1="674" y1="196.5" x2="1224" y2="196.5" stroke="#10a878" stroke-width="1" stroke-dasharray="3,1"/>
<line x1="674" y1="245.5" x2="1224" y2="245.5" stroke="#10a878" stroke-width="1" stroke-dasharray="3,1"/>
<line x1="674" y1="403.5" x2="1224" y2="403.5" stroke="#10a878" stroke-width="1" stroke-dasharray="3,1"/>
<line x1="674" y1="427.5" x2="1224" y2="427.5" stroke="#10a878" stroke-width="1" stroke-dasharray="3,1"/>
<line x1="674" y1="451.5" x2="1224" y2="451.5" stroke="#10a878" stroke-width="1" stroke-dasharray="3,1"/>
<line x1="674" y1="482.5" x2="1224" y2="482.5" stroke="#10a878" stroke-width="1" stroke-dasharray="3,1"/>
</g>
<line x1="674" y1="324.5" x2="1224" y2="324.5" stroke="#00a080" stroke-width="1"/>
<line x1="677" y1="528" x2="1010" y2="324" stroke="#00a080" stroke-width="1"/>
<rect x="1008" y="322" width="5" height="5" fill="#fff" stroke="#f08080" stroke-width="1"/>
<rect x="672" y="527" width="6" height="2" fill="#fff"/>
<rect x="134" y="311" width="1" height="6" fill="#ff0000"/>
<rect x="133" y="314" width="3" height="2" fill="#ff0000"/>
<rect x="138" y="309" width="1" height="14" fill="#00d000"/>
<rect x="137" y="312" width="3" height="5" fill="#00d000"/>
<rect x="142" y="308" width="1" height="26" fill="#ff0000"/>
<rect x="141" y="312" width="3" height="20" fill="#ff0000"/>
<rect x="146" y="306" width="1" height="33" fill="#00d000"/>
<rect x="145" y="309" width="3" height="22" fill="#00d000"/>
<rect x="150" y="299" width="1" height="31" fill="#ff0000"/>
<rect x="149" y="309" width="3" height="13" fill="#ff0000"/>
<rect x="154" y="322" width="1" height="4" fill="#ff0000"/>
<rect x="153" y="323" width="3" height="2" fill="#ff0000"/>
<rect x="158" y="319" width="1" height="23" fill="#ff0000"/>
<rect x="157" y="325" width="3" height="11" fill="#ff0000"/>
<rect x="162" y="306" width="1" height="35" fill="#00d000"/>
<rect x="161" y="311" width="3" height="26" fill="#00d000"/>
<rect x="166" y="303" width="1" height="7" fill="#00d000"/>
<rect x="165" y="306" width="3" height="4" fill="#00d000"/>
<rect x="170" y="303" width="1" height="6" fill="#00ffff"/>
<rect x="169" y="306" width="3" height="1" fill="#00ffff"/>
<rect x="174" y="301" width="1" height="10" fill="#ff0000"/>
<rect x="173" y="305" width="3" height="2" fill="#ff0000"/>
<rect x="178" y="235" width="1" height="76" fill="#00d000"/>
<rect x="177" y="238" width="3" height="69" fill="#00d000"/>
<rect x="182" y="197" width="1" height="43" fill="#00d000"/>
<rect x="181" y="203" width="3" height="35" fill="#00d000"/>
<rect x="186" y="193" width="1" height="45" fill="#ff0000"/>
<rect x="185" y="203" width="3" height="27" fill="#ff0000"/>
<rect x="190" y="218" width="1" height="14" fill="#00d000"/>
<rect x="189" y="220" width="3" height="10" fill="#00d000"/>
<rect x="194" y="208" width="1" height="15" fill="#00d000"/>
<rect x="193" y="216" width="3" height="3" fill="#00d000"/>
<rect x="198" y="208" width="1" height="35" fill="#ff0000"/>
<rect x="197" y="216" width="3" height="24" fill="#ff0000"/>
<rect x="202" y="215" width="1" height="26" fill="#00d000"/>
<rect x="201" y="216" width="3" height="24" fill="#00d000"/>
<rect x="206" y="203" width="1" height="17" fill="#00d000"/>
<rect x="205" y="213" width="3" height="4" fill="#00d000"/>
<rect x="210" y="210" width="1" height="18" fill="#ff0000"/>
<rect x="209" y="213" width="3" height="11" fill="#ff0000"/>
<rect x="214" y="202" width="1" height="24" fill="#00d000"/>
<rect x="213" y="205" width="3" height="18" fill="#00d000"/>
<rect x="218" y="187" width="1" height="21" fill="#00d000"/>
<rect x="217" y="193" width="3" height="12" fill="#00d000"/>
<rect x="222" y="151" width="1" height="43" fill="#00d000"/>
<rect x="221" y="152" width="3" height="41" fill="#00d000"/>
<rect x="226" y="135" width="1" height="20" fill="#00d000"/>
<rect x="225" y="141" width="3" height="11" fill="#00d000"/>
<rect x="230" y="139" width="1" height="4" fill="#ff0000"/>
<rect x="229" y="141" width="3" height="1" fill="#ff0000"/>
<rect x="234" y="140" width="1" height="20" fill="#ff0000"/>
<rect x="233" y="142" width="3" height="10" fill="#ff0000"/>
<rect x="238" y="152" width="1" height="15" fill="#ff0000"/>
<rect x="237" y="152" width="3" height="9" fill="#ff0000"/>
<rect x="242" y="149" width="1" height="15" fill="#00d000"/>
<rect x="241" y="151" width="3" height="10" fill="#00d000"/>
<rect x="246" y="146" width="1" height="5" fill="#00d000"/>
<rect x="245" y="149" width="3" height="2" fill="#00d000"/>
<rect x="250" y="137" width="1" height="13" fill="#00d000"/>
<rect x="249" y="143" width="3" height="6" fill="#00d000"/>
<rect x="254" y="126" width="1" height="26" fill="#00d000"/>
<rect x="253" y="131" width="3" height="13" fill="#00d000"/>
<rect x="258" y="130" width="1" height="12" fill="#ff0000"/>
<rect x="257" y="131" width="3" height="8" fill="#ff0000"/>
<rect x="262" y="136" width="1" height="47" fill="#ff0000"/>
<rect x="261" y="139" width="3" height="36" fill="#ff0000"/>
<rect x="266" y="172" width="1" height="42" fill="#ff0000"/>
<rect x="265" y="175" width="3" height="38" fill="#ff0000"/>
<rect x="270" y="204" width="1" height="22" fill="#ff0000"/>
<rect x="269" y="212" width="3" height="12" fill="#ff0000"/>
<rect x="274" y="217" width="1" height="30" fill="#ff0000"/>
<rect x="273" y="225" width="3" height="19" fill="#ff0000"/>
<rect x="278" y="229" width="1" height="17" fill="#00d000"/>
<rect x="277" y="234" width="3" height="10" fill="#00d000"/>
<rect x="282" y="214" width="1" height="24" fill="#00d000"/>
<rect x="281" y="220" width="3" height="14" fill="#00d000"/>
<rect x="286" y="194" width="1" height="28" fill="#00d000"/>
<rect x="285" y="199" width="3" height="21" fill="#00d000"/>
<rect x="290" y="187" width="1" height="13" fill="#00d000"/>
<rect x="289" y="192" width="3" height="7" fill="#00d000"/>
<rect x="294" y="189" width="1" height="10" fill="#ff0000"/>
<rect x="293" y="192" width="3" height="4" fill="#ff0000"/>
<rect x="298" y="191" width="1" height="5" fill="#00d000"/>
<rect x="297" y="194" width="3" height="2" fill="#00d000"/>
<rect x="302" y="193" width="1" height="4" fill="#ff0000"/>
<rect x="301" y="194" width="3" height="3" fill="#ff0000"/>
<rect x="306" y="177" width="1" height="26" fill="#00d000"/>
<rect x="305" y="181" width="3" height="16" fill="#00d000"/>
<rect x="310" y="175" width="1" height="10" fill="#00d000"/>
<rect x="309" y="176" width="3" height="5" fill="#00d000"/>
<rect x="314" y="168" width="1" height="10" fill="#ff0000"/>
<rect x="313" y="176" width="3" height="1" fill="#ff0000"/>
<rect x="318" y="164" width="1" height="21" fill="#00d000"/>
<rect x="317" y="172" width="3" height="5" fill="#00d000"/>
<rect x="322" y="169" width="1" height="9" fill="#ff0000"/>
<rect x="321" y="172" width="3" height="6" fill="#ff0000"/>
<rect x="326" y="175" width="1" height="5" fill="#00d000"/>
<rect x="325" y="175" width="3" height="3" fill="#00d000"/>
<rect x="330" y="170" width="1" height="15" fill="#ff0000"/>
<rect x="329" y="175" width="3" height="7" fill="#ff0000"/>
<rect x="334" y="178" width="1" height="5" fill="#00d000"/>
<rect x="333" y="178" width="3" height="3" fill="#00d000"/>
<rect x="338" y="166" width="1" height="12" fill="#00d000"/>
<rect x="337" y="171" width="3" height="6" fill="#00d000"/>
<rect x="342" y="162" width="1" height="18" fill="#00d000"/>
<rect x="341" y="165" width="3" height="7" fill="#00d000"/>
<rect x="346" y="150" width="1" height="16" fill="#00d000"/>
<rect x="345" y="158" width="3" height="6" fill="#00d000"/>
<rect x="350" y="155" width="1" height="14" fill="#ff0000"/>
<rect x="349" y="158" width="3" height="8" fill="#ff0000"/>
<rect x="354" y="166" width="1" height="14" fill="#ff0000"/>
<rect x="353" y="167" width="3" height="10" fill="#ff0000"/>
<rect x="358" y="171" width="1" height="22" fill="#ff0000"/>
<rect x="357" y="177" width="3" height="10" fill="#ff0000"/>
<rect x="362" y="181" width="1" height="16" fill="#ff0000"/>
<rect x="361" y="187" width="3" height="4" fill="#ff0000"/>
<rect x="366" y="186" width="1" height="11" fill="#00d000"/>
<rect x="365" y="190" width="3" height="1" fill="#00d000"/>
<rect x="370" y="187" width="1" height="10" fill="#ff0000"/>
<rect x="369" y="190" width="3" height="4" fill="#ff0000"/>
<rect x="374" y="189" width="1" height="8" fill="#00d000"/>
<rect x="373" y="193" width="3" height="2" fill="#00d000"/>
<rect x="378" y="176" width="1" height="25" fill="#00d000"/>
<rect x="377" y="181" width="3" height="12" fill="#00d000"/>
<rect x="382" y="178" width="1" height="7" fill="#00ffff"/>
<rect x="381" y="181" width="3" height="1" fill="#00ffff"/>
<rect x="386" y="178" width="1" height="5" fill="#00ffff"/>
<rect x="385" y="181" width="3" height="1" fill="#00ffff"/>
<rect x="390" y="177" width="1" height="12" fill="#00d000"/>
<rect x="389" y="178" width="3" height="3" fill="#00d000"/>
<rect x="394" y="175" width="1" height="18" fill="#ff0000"/>
<rect x="393" y="178" width="3" height="7" fill="#ff0000"/>
<rect x="398" y="176" width="1" height="12" fill="#00d000"/>
<rect x="397" y="176" width="3" height="9" fill="#00d000"/>
<rect x="402" y="175" width="1" height="16" fill="#ff0000"/>
<rect x="401" y="176" width="3" height="12" fill="#ff0000"/>
<rect x="406" y="178" width="1" height="21" fill="#ff0000"/>
<rect x="405" y="188" width="3" height="3" fill="#ff0000"/>
<rect x="410" y="186" width="1" height="8" fill="#00d000"/>
<rect x="409" y="187" width="3" height="4" fill="#00d000"/>
<rect x="414" y="177" width="1" height="19" fill="#ff0000"/>
<rect x="413" y="187" width="3" height="7" fill="#ff0000"/>
<rect x="418" y="193" width="1" height="8" fill="#ff0000"/>
<rect x="417" y="194" width="3" height="5" fill="#ff0000"/>
<rect x="422" y="195" width="1" height="7" fill="#00ffff"/>
<rect x="421" y="199" width="3" height="1" fill="#00ffff"/>
<rect x="426" y="189" width="1" height="19" fill="#ff0000"/>
<rect x="425" y="199" width="3" height="7" fill="#ff0000"/>
<rect x="430" y="200" width="1" height="8" fill="#00d000"/>
<rect x="429" y="201" width="3" height="5" fill="#00d000"/>
<rect x="434" y="199" width="1" height="10" fill="#ff0000"/>
<rect x="433" y="201" width="3" height="6" fill="#ff0000"/>
<rect x="438" y="201" width="1" height="14" fill="#00d000"/>
<rect x="437" y="204" width="3" height="3" fill="#00d000"/>
<rect x="442" y="200" width="1" height="4" fill="#00ffff"/>
<rect x="441" y="204" width="3" height="1" fill="#00ffff"/>
<rect x="446" y="193" width="1" height="11" fill="#00ffff"/>
<rect x="445" y="203" width="3" height="1" fill="#00ffff"/>
<rect x="450" y="198" width="1" height="10" fill="#00d000"/>
<rect x="449" y="200" width="3" height="4" fill="#00d000"/>
<rect x="454" y="197" width="1" height="9" fill="#00ffff"/>
<rect x="453" y="200" width="3" height="1" fill="#00ffff"/>
<rect x="458" y="190" width="1" height="24" fill="#ff0000"/>
<rect x="457" y="200" width="3" height="11" fill="#ff0000"/>
<rect x="462" y="205" width="1" height="9" fill="#00ffff"/>
<rect x="461" y="210" width="3" height="1" fill="#00ffff"/>
<rect x="466" y="208" width="1" height="8" fill="#ff0000"/>
<rect x="465" y="211" width="3" height="2" fill="#ff0000"/>
<rect x="470" y="211" width="1" height="9" fill="#ff0000"/>
<rect x="469" y="213" width="3" height="3" fill="#ff0000"/>
<rect x="474" y="213" width="1" height="7" fill="#ff0000"/>
<rect x="473" y="216" width="3" height="4" fill="#ff0000"/>
<rect x="478" y="216" width="1" height="11" fill="#ff0000"/>
<rect x="477" y="220" width="3" height="4" fill="#ff0000"/>
<rect x="482" y="216" width="1" height="15" fill="#ff0000"/>
<rect x="481" y="224" width="3" height="5" fill="#ff0000"/>
<rect x="486" y="220" width="1" height="16" fill="#00d000"/>
<rect x="485" y="225" width="3" height="5" fill="#00d000"/>
<rect x="490" y="202" width="1" height="29" fill="#00d000"/>
<rect x="489" y="206" width="3" height="19" fill="#00d000"/>
<rect x="494" y="200" width="1" height="11" fill="#00d000"/>
<rect x="493" y="202" width="3" height="3" fill="#00d000"/>
<rect x="498" y="194" width="1" height="8" fill="#00d000"/>
<rect x="497" y="198" width="3" height="4" fill="#00d000"/>
<rect x="502" y="192" width="1" height="14" fill="#ff0000"/>
<rect x="501" y="198" width="3" height="6" fill="#ff0000"/>
<rect x="506" y="201" width="1" height="15" fill="#ff0000"/>
<rect x="505" y="205" width="3" height="3" fill="#ff0000"/>
<rect x="510" y="199" width="1" height="23" fill="#ff0000"/>
<rect x="509" y="207" width="3" height="9" fill="#ff0000"/>
<rect x="514" y="213" width="1" height="12" fill="#00d000"/>
<rect x="513" y="215" width="3" height="2" fill="#00d000"/>
<rect x="518" y="210" width="1" height="10" fill="#ff0000"/>
<rect x="517" y="215" width="3" height="4" fill="#ff0000"/>
<rect x="522" y="212" width="1" height="12" fill="#00d000"/>
<rect x="521" y="212" width="3" height="6" fill="#00d000"/>
<rect x="526" y="209" width="1" height="5" fill="#ff0000"/>
<rect x="525" y="212" width="3" height="2" fill="#ff0000"/>
<rect x="530" y="209" width="1" height="18" fill="#ff0000"/>
<rect x="529" y="214" width="3" height="7" fill="#ff0000"/>
<rect x="534" y="218" width="1" height="7" fill="#ff0000"/>
<rect x="533" y="221" width="3" height="2" fill="#ff0000"/>
<rect x="538" y="222" width="1" height="14" fill="#ff0000"/>
<rect x="537" y="223" width="3" height="5" fill="#ff0000"/>
<rect x="542" y="227" width="1" height="14" fill="#ff0000"/>
<rect x="541" y="228" width="3" height="12" fill="#ff0000"/>
<rect x="546" y="238" width="1" height="17" fill="#ff0000"/>
<rect x="545" y="240" width="3" height="12" fill="#ff0000"/>
<rect x="550" y="253" width="1" height="6" fill="#ff0000"/>
<rect x="549" y="253" width="3" height="3" fill="#ff0000"/>
<rect x="554" y="253" width="1" height="24" fill="#ff0000"/>
<rect x="553" y="256" width="3" height="17" fill="#ff0000"/>
<rect x="558" y="270" width="1" height="25" fill="#ff0000"/>
<rect x="557" y="273" width="3" height="19" fill="#ff0000"/>
<rect x="562" y="287" width="1" height="28" fill="#ff0000"/>
<rect x="561" y="292" width="3" height="15" fill="#ff0000"/>
<rect x="566" y="299" width="1" height="14" fill="#ff0000"/>
<rect x="565" y="307" width="3" height="3" fill="#ff0000"/>
<rect x="570" y="307" width="1" height="5" fill="#00ffff"/>
<rect x="569" y="310" width="3" height="1" fill="#00ffff"/>
<rect x="574" y="308" width="1" height="12" fill="#ff0000"/>
<rect x="573" y="310" width="3" height="9" fill="#ff0000"/>
<rect x="578" y="316" width="1" height="24" fill="#ff0000"/>
<rect x="577" y="319" width="3" height="18" fill="#ff0000"/>
<rect x="582" y="327" width="1" height="21" fill="#ff0000"/>
<rect x="581" y="337" width="3" height="10" fill="#ff0000"/>
<rect x="586" y="347" width="1" height="29" fill="#ff0000"/>
<rect x="585" y="347" width="3" height="21" fill="#ff0000"/>
<rect x="590" y="368" width="1" height="24" fill="#ff0000"/>
<rect x="589" y="368" width="3" height="21" fill="#ff0000"/>
<rect x="594" y="373" width="1" height="21" fill="#00d000"/>
<rect x="593" y="383" width="3" height="5" fill="#00d000"/>
<rect x="598" y="383" width="1" height="9" fill="#ff0000"/>
<rect x="597" y="383" width="3" height="6" fill="#ff0000"/>
<rect x="602" y="387" width="1" height="9" fill="#ff0000"/>
<rect x="601" y="388" width="3" height="6" fill="#ff0000"/>
<rect x="606" y="391" width="1" height="15" fill="#ff0000"/>
<rect x="605" y="394" width="3" height="4" fill="#ff0000"/>
<rect x="610" y="396" width="1" height="14" fill="#ff0000"/>
<rect x="609" y="398" width="3" height="9" fill="#ff0000"/>
<rect x="614" y="408" width="1" height="15" fill="#ff0000"/>
<rect x="613" y="408" width="3" height="9" fill="#ff0000"/>
<rect x="618" y="405" width="1" height="17" fill="#00d000"/>
<rect x="617" y="415" width="3" height="1" fill="#00d000"/>
<rect x="622" y="407" width="1" height="10" fill="#00d000"/>
<rect x="621" y="407" width="3" height="8" fill="#00d000"/>
<rect x="626" y="400" width="1" height="11" fill="#00d000"/>
<rect x="625" y="400" width="3" height="7" fill="#00d000"/>
<rect x="630" y="392" width="1" height="27" fill="#ff0000"/>
<rect x="629" y="400" width="3" height="13" fill="#ff0000"/>
<rect x="634" y="407" width="1" height="12" fill="#ff0000"/>
<rect x="633" y="413" width="3" height="5" fill="#ff0000"/>
<rect x="638" y="415" width="1" height="13" fill="#ff0000"/>
<rect x="637" y="418" width="3" height="10" fill="#ff0000"/>
<rect x="642" y="425" width="1" height="21" fill="#ff0000"/>
<rect x="641" y="428" width="3" height="15" fill="#ff0000"/>
<rect x="646" y="442" width="1" height="13" fill="#ff0000"/>
<rect x="645" y="443" width="3" height="10" fill="#ff0000"/>
<rect x="650" y="443" width="1" height="12" fill="#00ffff"/>
<rect x="649" y="453" width="3" height="1" fill="#00ffff"/>
<rect x="654" y="448" width="1" height="47" fill="#ff0000"/>
<rect x="653" y="453" width="3" height="39" fill="#ff0000"/>
<rect x="658" y="472" width="1" height="24" fill="#00d000"/>
<rect x="657" y="480" width="3" height="13" fill="#00d000"/>
<rect x="662" y="469" width="1" height="12" fill="#00d000"/>
<rect x="661" y="472" width="3" height="8" fill="#00d000"/>
<rect x="666" y="457" width="1" height="16" fill="#00d000"/>
<rect x="665" y="459" width="3" height="13" fill="#00d000"/>
<rect x="670" y="455" width="1" height="7" fill="#ff0000"/>
<rect x="669" y="459" width="3" height="2" fill="#ff0000"/>
<rect x="674" y="453" width="1" height="20" fill="#ff0000"/>
<rect x="673" y="461" width="3" height="6" fill="#ff0000"/>
<rect x="678" y="429" width="1" height="41" fill="#00d000"/>
<rect x="677" y="430" width="3" height="37" fill="#00d000"/>
<rect x="682" y="421" width="1" height="17" fill="#00d000"/>
<rect x="681" y="426" width="3" height="4" fill="#00d000"/>
<rect x="686" y="418" width="1" height="18" fill="#ff0000"/>
<rect x="685" y="426" width="3" height="7" fill="#ff0000"/>
<rect x="690" y="421" width="1" height="13" fill="#00d000"/>
<rect x="689" y="431" width="3" height="2" fill="#00d000"/>
<rect x="694" y="429" width="1" height="18" fill="#ff0000"/>
<rect x="693" y="431" width="3" height="15" fill="#ff0000"/>
<rect x="698" y="437" width="1" height="9" fill="#00d000"/>
<rect x="697" y="437" width="3" height="9" fill="#00d000"/>
<rect x="702" y="426" width="1" height="14" fill="#00d000"/>
<rect x="701" y="426" width="3" height="12" fill="#00d000"/>
<rect x="706" y="415" width="1" height="15" fill="#00d000"/>
<rect x="705" y="418" width="3" height="8" fill="#00d000"/>
<rect x="710" y="412" width="1" height="13" fill="#ff0000"/>
<rect x="709" y="418" width="3" height="3" fill="#ff0000"/>
<rect x="714" y="416" width="1" height="23" fill="#ff0000"/>
<rect x="713" y="421" width="3" height="10" fill="#ff0000"/>
<rect x="718" y="430" width="1" height="12" fill="#ff0000"/>
<rect x="717" y="431" width="3" height="5" fill="#ff0000"/>
<rect x="722" y="409" width="1" height="33" fill="#00d000"/>
<rect x="721" y="414" width="3" height="22" fill="#00d000"/>
<rect x="726" y="404" width="1" height="11" fill="#00ffff"/>
<rect x="725" y="414" width="3" height="1" fill="#00ffff"/>
<rect x="730" y="410" width="1" height="7" fill="#00ffff"/>
<rect x="729" y="414" width="3" height="1" fill="#00ffff"/>
<rect x="734" y="404" width="1" height="16" fill="#00d000"/>
<rect x="733" y="408" width="3" height="6" fill="#00d000"/>
<rect x="738" y="401" width="1" height="13" fill="#00d000"/>
<rect x="737" y="403" width="3" height="5" fill="#00d000"/>
<rect x="742" y="383" width="1" height="23" fill="#00d000"/>
<rect x="741" y="391" width="3" height="12" fill="#00d000"/>
<rect x="746" y="378" width="1" height="19" fill="#00d000"/>
<rect x="745" y="388" width="3" height="3" fill="#00d000"/>
<rect x="750" y="386" width="1" height="8" fill="#ff0000"/>
<rect x="749" y="388" width="3" height="3" fill="#ff0000"/>
<rect x="754" y="387" width="1" height="7" fill="#00ffff"/>
<rect x="753" y="391" width="3" height="1" fill="#00ffff"/>
<rect x="758" y="388" width="1" height="13" fill="#ff0000"/>
<rect x="757" y="392" width="3" height="6" fill="#ff0000"/>
<rect x="762" y="388" width="1" height="17" fill="#00d000"/>
<rect x="761" y="394" width="3" height="3" fill="#00d000"/>
<rect x="766" y="391" width="1" height="9" fill="#00d000"/>
<rect x="765" y="391" width="3" height="3" fill="#00d000"/>
<rect x="770" y="388" width="1" height="5" fill="#00ffff"/>
<rect x="769" y="391" width="3" height="1" fill="#00ffff"/>
<rect x="774" y="380" width="1" height="14" fill="#00ffff"/>
<rect x="773" y="391" width="3" height="1" fill="#00ffff"/>
<rect x="778" y="386" width="1" height="16" fill="#ff0000"/>
<rect x="777" y="390" width="3" height="6" fill="#ff0000"/>
<rect x="782" y="393" width="1" height="10" fill="#ff0000"/>
<rect x="781" y="396" width="3" height="6" fill="#ff0000"/>
<rect x="786" y="394" width="1" height="17" fill="#ff0000"/>
<rect x="785" y="402" width="3" height="6" fill="#ff0000"/>
<rect x="790" y="405" width="1" height="7" fill="#ff0000"/>
<rect x="789" y="408" width="3" height="1" fill="#ff0000"/>
<rect x="794" y="397" width="1" height="14" fill="#00d000"/>
<rect x="793" y="405" width="3" height="4" fill="#00d000"/>
<rect x="798" y="392" width="1" height="19" fill="#00d000"/>
<rect x="797" y="396" width="3" height="9" fill="#00d000"/>
<rect x="802" y="387" width="1" height="12" fill="#00ffff"/>
<rect x="801" y="396" width="3" height="1" fill="#00ffff"/>
<rect x="806" y="395" width="1" height="11" fill="#ff0000"/>
<rect x="805" y="395" width="3" height="5" fill="#ff0000"/>
<rect x="810" y="390" width="1" height="17" fill="#ff0000"/>
<rect x="809" y="400" width="3" height="6" fill="#ff0000"/>
<rect x="814" y="404" width="1" height="3" fill="#00ffff"/>
<rect x="813" y="406" width="3" height="1" fill="#00ffff"/>
<rect x="818" y="403" width="1" height="11" fill="#ff0000"/>
<rect x="817" y="406" width="3" height="6" fill="#ff0000"/>
<rect x="822" y="408" width="1" height="8" fill="#00ffff"/>
<rect x="821" y="412" width="3" height="1" fill="#00ffff"/>
<rect x="826" y="393" width="1" height="22" fill="#00d000"/>
<rect x="825" y="399" width="3" height="13" fill="#00d000"/>
<rect x="830" y="394" width="1" height="11" fill="#ff0000"/>
<rect x="829" y="399" width="3" height="3" fill="#ff0000"/>
<rect x="834" y="402" width="1" height="13" fill="#ff0000"/>
<rect x="833" y="402" width="3" height="11" fill="#ff0000"/>
<rect x="838" y="412" width="1" height="11" fill="#ff0000"/>
<rect x="837" y="412" width="3" height="3" fill="#ff0000"/>
<rect x="842" y="415" width="1" height="7" fill="#ff0000"/>
<rect x="841" y="415" width="3" height="5" fill="#ff0000"/>
<rect x="846" y="416" width="1" height="18" fill="#ff0000"/>
<rect x="845" y="420" width="3" height="6" fill="#ff0000"/>
<rect x="850" y="418" width="1" height="12" fill="#ff0000"/>
<rect x="849" y="426" width="3" height="2" fill="#ff0000"/>
<rect x="854" y="424" width="1" height="4" fill="#ff0000"/>
<rect x="853" y="427" width="3" height="1" fill="#ff0000"/>
<rect x="858" y="413" width="1" height="19" fill="#00d000"/>
<rect x="857" y="423" width="3" height="6" fill="#00d000"/>
<rect x="862" y="412" width="1" height="11" fill="#00d000"/>
<rect x="861" y="418" width="3" height="5" fill="#00d000"/>
<rect x="866" y="415" width="1" height="13" fill="#ff0000"/>
<rect x="865" y="418" width="3" height="2" fill="#ff0000"/>
<rect x="870" y="416" width="1" height="10" fill="#00d000"/>
<rect x="869" y="418" width="3" height="2" fill="#00d000"/>
<rect x="874" y="413" width="1" height="7" fill="#00d000"/>
<rect x="873" y="416" width="3" height="3" fill="#00d000"/>
<rect x="878" y="411" width="1" height="6" fill="#ff0000"/>
<rect x="877" y="416" width="3" height="1" fill="#ff0000"/>
<rect x="882" y="416" width="1" height="9" fill="#ff0000"/>
<rect x="881" y="417" width="3" height="5" fill="#ff0000"/>
<rect x="886" y="416" width="1" height="8" fill="#00d000"/>
<rect x="885" y="419" width="3" height="2" fill="#00d000"/>
<rect x="890" y="416" width="1" height="7" fill="#ff0000"/>
<rect x="889" y="419" width="3" height="1" fill="#ff0000"/>
<rect x="894" y="419" width="1" height="13" fill="#ff0000"/>
<rect x="893" y="421" width="3" height="5" fill="#ff0000"/>
<rect x="898" y="420" width="1" height="8" fill="#00d000"/>
<rect x="897" y="420" width="3" height="5" fill="#00d000"/>
<rect x="902" y="420" width="1" height="1" fill="#00ffff"/>
<rect x="901" y="420" width="3" height="1" fill="#00ffff"/>
<rect x="906" y="410" width="1" height="10" fill="#00ffff"/>
<rect x="905" y="420" width="3" height="1" fill="#00ffff"/>
<rect x="910" y="416" width="1" height="16" fill="#ff0000"/>
<rect x="909" y="420" width="3" height="4" fill="#ff0000"/>
<rect x="914" y="423" width="1" height="12" fill="#ff0000"/>
<rect x="913" y="424" width="3" height="8" fill="#ff0000"/>
<rect x="918" y="430" width="1" height="40" fill="#ff0000"/>
<rect x="917" y="432" width="3" height="38" fill="#ff0000"/>
<rect x="922" y="467" width="1" height="5" fill="#ff0000"/>
<rect x="921" y="470" width="3" height="1" fill="#ff0000"/>
<rect x="926" y="468" width="1" height="9" fill="#ff0000"/>
<rect x="925" y="471" width="3" height="4" fill="#ff0000"/>
<rect x="930" y="457" width="1" height="21" fill="#00d000"/>
<rect x="929" y="463" width="3" height="12" fill="#00d000"/>
<rect x="934" y="453" width="1" height="10" fill="#00d000"/>
<rect x="933" y="461" width="3" height="2" fill="#00d000"/>
<rect x="938" y="459" width="1" height="2" fill="#00ffff"/>
<rect x="937" y="461" width="3" height="1" fill="#00ffff"/>
<rect x="942" y="451" width="1" height="61" fill="#ff0000"/>
<rect x="941" y="461" width="3" height="43" fill="#ff0000"/>
<rect x="946" y="504" width="1" height="11" fill="#ff0000"/>
<rect x="945" y="504" width="3" height="5" fill="#ff0000"/>
<rect x="950" y="490" width="1" height="19" fill="#00d000"/>
<rect x="949" y="500" width="3" height="9" fill="#00d000"/>
<rect x="954" y="476" width="1" height="26" fill="#00d000"/>
<rect x="953" y="484" width="3" height="16" fill="#00d000"/>
<rect x="958" y="482" width="1" height="5" fill="#00d000"/>
<rect x="957" y="483" width="3" height="1" fill="#00d000"/>
<rect x="962" y="468" width="1" height="17" fill="#00d000"/>
<rect x="961" y="472" width="3" height="10" fill="#00d000"/>
<rect x="966" y="463" width="1" height="16" fill="#00d000"/>
<rect x="965" y="466" width="3" height="7" fill="#00d000"/>
<rect x="970" y="464" width="1" height="2" fill="#00d000"/>
<rect x="969" y="464" width="3" height="2" fill="#00d000"/>
<rect x="974" y="460" width="1" height="11" fill="#ff0000"/>
<rect x="973" y="464" width="3" height="1" fill="#ff0000"/>
<rect x="978" y="460" width="1" height="23" fill="#ff0000"/>
<rect x="977" y="465" width="3" height="12" fill="#ff0000"/>
<rect x="982" y="474" width="1" height="21" fill="#ff0000"/>
<rect x="981" y="477" width="3" height="17" fill="#ff0000"/>
<rect x="986" y="492" width="1" height="18" fill="#ff0000"/>
<rect x="985" y="494" width="3" height="13" fill="#ff0000"/>
<rect x="990" y="495" width="1" height="13" fill="#00d000"/>
<rect x="989" y="496" width="3" height="11" fill="#00d000"/>
<rect x="994" y="487" width="1" height="17" fill="#00d000"/>
<rect x="993" y="487" width="3" height="9" fill="#00d000"/>
<rect x="998" y="475" width="1" height="13" fill="#00d000"/>
<rect x="997" y="480" width="3" height="7" fill="#00d000"/>
<rect x="1002" y="477" width="1" height="7" fill="#ff0000"/>
<rect x="1001" y="480" width="3" height="4" fill="#ff0000"/>
<rect x="1006" y="478" width="1" height="12" fill="#00d000"/>
<rect x="1005" y="480" width="3" height="4" fill="#00d000"/>
<rect x="1010" y="433" width="1" height="50" fill="#00d000"/>
<rect x="1009" y="441" width="3" height="39" fill="#00d000"/>
<rect x="1014" y="434" width="1" height="11" fill="#00d000"/>
<rect x="1013" y="437" width="3" height="4" fill="#00d000"/>
<rect x="1018" y="434" width="1" height="5" fill="#00ffff"/>
<rect x="1017" y="437" width="3" height="1" fill="#00ffff"/>
<rect x="1022" y="432" width="1" height="23" fill="#ff0000"/>
<rect x="1021" y="436" width="3" height="11" fill="#ff0000"/>
<rect x="1026" y="443" width="1" height="10" fill="#ff0000"/>
<rect x="1025" y="448" width="3" height="5" fill="#ff0000"/>
<rect x="1030" y="439" width="1" height="20" fill="#00d000"/>
<rect x="1029" y="447" width="3" height="6" fill="#00d000"/>
<rect x="1034" y="444" width="1" height="16" fill="#ff0000"/>
<rect x="1033" y="447" width="3" height="9" fill="#ff0000"/>
<rect x="1038" y="456" width="1" height="19" fill="#ff0000"/>
<rect x="1037" y="456" width="3" height="11" fill="#ff0000"/>
<rect x="1042" y="458" width="1" height="21" fill="#ff0000"/>
<rect x="1041" y="466" width="3" height="5" fill="#ff0000"/>
<rect x="1046" y="470" width="1" height="9" fill="#00ffff"/>
<rect x="1045" y="471" width="3" height="1" fill="#00ffff"/>
<rect x="1050" y="453" width="1" height="24" fill="#00d000"/>
<rect x="1049" y="461" width="3" height="10" fill="#00d000"/>
<rect x="1054" y="455" width="1" height="10" fill="#00d000"/>
<rect x="1053" y="458" width="3" height="3" fill="#00d000"/>
<rect x="1058" y="450" width="1" height="12" fill="#00d000"/>
<rect x="1057" y="453" width="3" height="5" fill="#00d000"/>
<rect x="1062" y="434" width="1" height="19" fill="#00d000"/>
<rect x="1061" y="437" width="3" height="16" fill="#00d000"/>
<rect x="1066" y="412" width="1" height="28" fill="#00d000"/>
<rect x="1065" y="418" width="3" height="19" fill="#00d000"/>
<rect x="1070" y="389" width="1" height="32" fill="#00d000"/>
<rect x="1069" y="399" width="3" height="19" fill="#00d000"/>
<rect x="1074" y="378" width="1" height="21" fill="#00d000"/>
<rect x="1073" y="380" width="3" height="19" fill="#00d000"/>
<rect x="1078" y="369" width="1" height="14" fill="#00d000"/>
<rect x="1077" y="369" width="3" height="10" fill="#00d000"/>
<rect x="1082" y="367" width="1" height="3" fill="#00d000"/>
<rect x="1081" y="368" width="3" height="1" fill="#00d000"/>
<rect x="1086" y="364" width="1" height="8" fill="#00ffff"/>
<rect x="1085" y="368" width="3" height="1" fill="#00ffff"/>
<rect x="1090" y="367" width="1" height="7" fill="#ff0000"/>
<rect x="1089" y="368" width="3" height="3" fill="#ff0000"/>
<rect x="1094" y="367" width="1" height="7" fill="#00d000"/>
<rect x="1093" y="369" width="3" height="2" fill="#00d000"/>
<rect x="1098" y="367" width="1" height="8" fill="#ff0000"/>
<rect x="1097" y="369" width="3" height="3" fill="#ff0000"/>
<rect x="1102" y="362" width="1" height="14" fill="#00d000"/>
<rect x="1101" y="363" width="3" height="9" fill="#00d000"/>
<rect x="1106" y="341" width="1" height="24" fill="#00d000"/>
<rect x="1105" y="344" width="3" height="19" fill="#00d000"/>
<rect x="1110" y="339" width="1" height="9" fill="#ff0000"/>
<rect x="1109" y="344" width="3" height="1" fill="#ff0000"/>
<rect x="1114" y="335" width="1" height="18" fill="#ff0000"/>
<rect x="1113" y="345" width="3" height="6" fill="#ff0000"/>
<rect x="1118" y="346" width="1" height="12" fill="#00ffff"/>
<rect x="1117" y="351" width="3" height="1" fill="#00ffff"/>
<rect x="1122" y="347" width="1" height="16" fill="#ff0000"/>
<rect x="1121" y="352" width="3" height="8" fill="#ff0000"/>
<rect x="1126" y="357" width="1" height="23" fill="#ff0000"/>
<rect x="1125" y="359" width="3" height="15" fill="#ff0000"/>
<rect x="1130" y="373" width="1" height="8" fill="#ff0000"/>
<rect x="1129" y="374" width="3" height="6" fill="#ff0000"/>
<rect x="1134" y="380" width="1" height="10" fill="#ff0000"/>
<rect x="1133" y="381" width="3" height="9" fill="#ff0000"/>
<rect x="1138" y="389" width="1" height="6" fill="#00ffff"/>
<rect x="1137" y="389" width="3" height="1" fill="#00ffff"/>
<rect x="1142" y="384" width="1" height="12" fill="#ff0000"/>
<rect x="1141" y="390" width="3" height="2" fill="#ff0000"/>
<rect x="1146" y="382" width="1" height="15" fill="#ff0000"/>
<rect x="1145" y="392" width="3" height="1" fill="#ff0000"/>
<rect x="1150" y="390" width="1" height="12" fill="#ff0000"/>
<rect x="1149" y="393" width="3" height="5" fill="#ff0000"/>
<rect x="1154" y="396" width="1" height="8" fill="#00ffff"/>
<rect x="1153" y="398" width="3" height="1" fill="#00ffff"/>
<rect x="1158" y="393" width="1" height="14" fill="#ff0000"/>
<rect x="1157" y="398" width="3" height="6" fill="#ff0000"/>
<rect x="1162" y="398" width="1" height="8" fill="#00d000"/>
<rect x="1161" y="403" width="3" height="1" fill="#00d000"/>
<rect x="1166" y="403" width="1" height="12" fill="#ff0000"/>
<rect x="1165" y="403" width="3" height="6" fill="#ff0000"/>
<rect x="1170" y="401" width="1" height="14" fill="#ff0000"/>
<rect x="1169" y="409" width="3" height="5" fill="#ff0000"/>
<rect x="1174" y="412" width="1" height="6" fill="#ff0000"/>
<rect x="1173" y="414" width="3" height="4" fill="#ff0000"/>
<rect x="1178" y="412" width="1" height="10" fill="#00d000"/>
<rect x="1177" y="413" width="3" height="6" fill="#00d000"/>
<rect x="1182" y="406" width="1" height="9" fill="#00d000"/>
<rect x="1181" y="408" width="3" height="4" fill="#00d000"/>
<rect x="1186" y="391" width="1" height="20" fill="#00d000"/>
<rect x="1185" y="401" width="3" height="7" fill="#00d000"/>
<rect x="1190" y="395" width="1" height="10" fill="#00ffff"/>
<rect x="1189" y="401" width="3" height="1" fill="#00ffff"/>
<rect x="1194" y="397" width="1" height="15" fill="#ff0000"/>
<rect x="1193" y="402" width="3" height="2" fill="#ff0000"/>
<rect x="1198" y="404" width="1" height="7" fill="#ff0000"/>
<rect x="1197" y="404" width="3" height="4" fill="#ff0000"/>
<rect x="1202" y="404" width="1" height="21" fill="#ff0000"/>
<rect x="1201" y="408" width="3" height="9" fill="#ff0000"/>
<rect x="1206" y="409" width="1" height="10" fill="#00d000"/>
<rect x="1205" y="410" width="3" height="6" fill="#00d000"/>
<rect x="1210" y="400" width="1" height="12" fill="#00d000"/>
<rect x="1209" y="402" width="3" height="9" fill="#00d000"/>
<rect x="1214" y="393" width="1" height="9" fill="#00d000"/>
<rect x="1213" y="393" width="3" height="8" fill="#00d000"/>
<rect x="1218" y="390" width="1" height="4" fill="#00d000"/>
<rect x="1217" y="390" width="3" height="3" fill="#00d000"/>
<rect x="1222" y="387" width="1" height="7" fill="#00ffff"/>
<rect x="1221" y="390" width="3" height="1" fill="#00ffff"/>
<polyline points="986.0,527.0 1014.0,418.0 1035.0,481.0 1074.0,346.0 1093.0,387.0 1107.0,321.0" fill="none" stroke="#00e5ff" stroke-width="1.6" stroke-linejoin="round" stroke-linecap="round" />
<polyline points="256.7,126.3 277.0,256.0 345.0,153.0 654.0,501.0 772.6,382.3 987.0,528.6 1107.0,320.0 1169.0,428.0" fill="none" stroke="#ffff00" stroke-width="3.1" stroke-linejoin="round" stroke-linecap="round" />
<polyline points="1169.0,428.0 1195.4,220.2" fill="none" stroke="#ffff00" stroke-width="3" stroke-linejoin="round" stroke-linecap="round" />
<polyline points="1186.3,223.2 1195.4,220.2 1196.9,227.2" fill="none" stroke="#ffff00" stroke-width="2.5" stroke-linejoin="round" stroke-linecap="round" />
<polyline points="1169.0,428.0 1199.4,279.5" fill="none" stroke="#ffff00" stroke-width="3" stroke-linejoin="round" stroke-linecap="round" />
<polyline points="1194.9,281.0 1199.4,279.5 1204.9,285.6" fill="none" stroke="#ffff00" stroke-width="2.5" stroke-linejoin="round" stroke-linecap="round" />
<polyline points="1169.0,428.0 1202.0,349.0 1217.5,479.0" fill="none" stroke="#ffff00" stroke-width="3" stroke-linejoin="round" stroke-linecap="round" />
<polyline points="1212.2,474.6 1217.5,479.2 1224.0,460.2" fill="none" stroke="#ffff00" stroke-width="3" stroke-linejoin="round" stroke-linecap="round" />
<polyline points="272.0,267.0 272.0,282.0" fill="none" stroke="#ffff00" stroke-width="4" stroke-linejoin="round" stroke-linecap="round" />
<polyline points="353.6,132.5 358.1,127.5 365.4,125.2 372.2,125.2 374.5,128.6 374.5,136.0 369.4,138.6 364.5,140.0 354.5,142.0 372.6,142.6" fill="none" stroke="#ffff00" stroke-width="4" stroke-linejoin="round" stroke-linecap="round" />
<polyline points="621.0,498.5 626.6,495.2 635.0,495.0 635.0,501.0 625.0,505.8 637.0,506.2 636.5,511.0 630.0,515.0 620.5,517.0" fill="none" stroke="#ffff00" stroke-width="4" stroke-linejoin="round" stroke-linecap="round" />
<polyline points="759.0,379.0 760.5,354.5 747.5,371.8 769.0,371.8" fill="none" stroke="#ffff00" stroke-width="4" stroke-linejoin="round" stroke-linecap="round" />
<polyline points="1007.5,542.8 984.5,542.8 977.0,556.0 999.0,554.5 1000.0,560.0 995.0,564.0 984.5,565.0" fill="none" stroke="#ffff00" stroke-width="4" stroke-linejoin="round" stroke-linecap="round" />
<polyline points="1081.0,311.0 1081.0,291.0 1058.5,291.0 1057.0,293.0 1057.0,304.0 1064.0,307.5 1081.0,293.0" fill="none" stroke="#ffff00" stroke-width="4" stroke-linejoin="round" stroke-linecap="round" />
<polyline points="1086.0,311.5 1092.5,310.5" fill="none" stroke="#ffff00" stroke-width="3.5" stroke-linejoin="round" stroke-linecap="round" />
<polyline points="1144.2,422.5 1144.2,464.0" fill="none" stroke="#ffff00" stroke-width="4" stroke-linejoin="round" stroke-linecap="round" />
<polyline points="1144.2,440.0 1159.0,440.0 1159.0,456.0 1154.5,460.0 1144.2,460.0" fill="none" stroke="#ffff00" stroke-width="4" stroke-linejoin="round" stroke-linecap="round" />
<polyline points="1173.0,206.0 1165.0,198.3 1156.0,198.3 1145.3,209.0 1145.3,223.0 1154.0,223.2 1161.0,224.5" fill="none" stroke="#ffff00" stroke-width="4" stroke-linejoin="round" stroke-linecap="round" />
<polyline points="1194.6,499.0 1194.0,490.3 1199.0,487.3 1208.0,487.3 1208.0,508.6 1204.4,511.5" fill="none" stroke="#ffff00" stroke-width="4" stroke-linejoin="round" stroke-linecap="round" />
<ellipse cx="1203.7" cy="523.7" rx="3" ry="1.8" fill="#ffff00"/>
<line x1="134" y1="576.5" x2="1224" y2="576.5" stroke="#ffffff" stroke-width="1" stroke-dasharray="4,2"/>
<line x1="134" y1="684.5" x2="1224" y2="684.5" stroke="#ffffff" stroke-width="1" stroke-dasharray="4,2"/>
<polyline points="133.8,638.0 139.0,638.0 142.3,673.8 146.3,621.0 150.2,648.0 154.0,641.0 158.7,657.4 162.7,625.8 166.2,616.4 174.4,616.4 177.9,568.4 182.6,552.0 186.1,577.7 193.8,573.0 198.5,598.0 204.9,584.8 210.7,592.5 217.7,579.0 222.0,562.5 226.4,558.5 230.6,577.7 234.1,573.0 238.8,588.7 248.2,581.0 254.0,576.5 262.3,614.0 266.5,648.0 270.5,644.5 277.5,652.7 286.9,621.0 290.4,621.0 298.6,629.3 306.8,612.9 313.8,612.9 318.5,606.6 323.2,621.0 326.7,621.0 332.6,612.9 338.4,612.0 346.2,600.5 350.2,602.3 354.8,627.0 358.4,623.4 362.6,643.3 369.6,641.0 374.8,623.4 381.8,620.6 390.0,626.2 394.7,616.4 399.4,634.0 406.4,635.0 414.6,659.8 418.1,636.3 420.0,638.7 430.5,653.3 434.5,640.6 438.3,643.0 442.7,634.8 446.5,639.4 450.5,639.4 456.3,649.3 459.8,652.3 469.2,665.0 478.6,678.6 485.6,665.0 490.3,625.9 494.5,620.5 506.7,644.6 510.2,644.6 514.9,636.4 518.4,639.4 522.4,635.2 526.6,640.0 530.1,661.0 534.8,661.7 540.0,678.6 546.6,699.2 550.5,689.6 554.0,709.0 562.3,722.0 566.5,699.2 578.2,718.9 582.9,722.0 586.9,730.0 590.6,730.0 594.6,720.3 598.6,724.3 602.3,724.3 605.8,730.6 610.3,706.7 614.0,713.3 618.7,704.8 622.7,683.7 630.9,692.6 635.6,695.0 643.8,706.7 650.8,710.2 654.4,721.2 657.9,697.8 662.6,697.8 666.5,671.1 674.3,682.1 678.3,639.9 682.5,647.0 686.7,641.0 690.7,645.8 694.7,654.0 698.9,638.7 706.4,625.9 710.6,637.6 714.8,640.0 718.3,643.4 722.6,622.3 726.5,629.4 735.2,620.5 744.6,605.5 748.8,607.1 758.2,619.5 762.9,613.0 766.4,611.8 771.0,607.6 775.8,610.6 786.8,635.2 790.5,635.2 798.0,616.5 802.2,619.5 810.9,638.3 814.4,638.3 821.9,647.0 826.1,621.2 830.4,641.0 834.3,635.9 837.9,640.0 842.6,654.0 847.2,654.0 854.3,661.0 862.5,641.0 866.5,641.0 875.8,633.6 878.2,633.6 882.9,649.3 886.6,640.0 894.6,658.7 898.8,639.4 905.4,639.4 910.5,638.7 914.7,655.1 918.0,704.4 922.2,685.1 926.5,692.2 930.4,655.1 934.4,665.7 938.2,648.1 942.9,682.1 946.8,679.0 950.4,672.7 955.0,654.7 958.6,654.0 963.3,643.4 970.3,635.9 974.3,648.1 978.0,643.9 983.2,663.4 986.7,666.4 990.7,647.6 994.4,647.6 998.4,636.4 1001.9,643.4 1006.6,643.4 1010.8,605.5 1014.4,603.0 1022.2,619.6 1028.8,621.8 1041.0,641.7 1046.5,634.0 1051.0,630.7 1057.6,616.3 1062.7,596.4 1067.0,586.4 1074.2,560.5 1078.6,568.7 1086.3,565.0 1090.1,576.5 1094.0,575.4 1098.5,579.8 1106.2,559.9 1110.7,576.5 1114.0,582.0 1118.4,577.0 1126.2,614.0 1129.5,617.4 1138.3,632.2 1142.7,625.6 1146.7,625.6 1151.6,630.7 1158.2,650.6 1162.2,636.2 1166.6,637.3 1170.4,650.6 1178.1,650.6 1188.8,632.9 1194.1,635.1 1198.5,631.8 1205.8,655.0 1210.2,634.4 1214.0,634.0 1218.4,614.0 1222.8,617.4" fill="none" stroke="#00f0ff" stroke-width="1.1" stroke-linejoin="round" stroke-linecap="round" />
<line x1="605" y1="733" x2="987" y2="700" stroke="#ffff80" stroke-width="1.3"/>
<rect x="138" y="829.5" width="1" height="1.3" fill="#1a1aff"/>
<rect x="142" y="829.5" width="1" height="2.7" fill="#1a1aff"/>
<rect x="146" y="829.5" width="1" height="2.7" fill="#1a1aff"/>
<rect x="150" y="829.5" width="1" height="2.5" fill="#1a1aff"/>
<rect x="154" y="829.5" width="1" height="2.2" fill="#1a1aff"/>
<rect x="158" y="829.5" width="1" height="3.4" fill="#1a1aff"/>
<rect x="162" y="829.5" width="1" height="1.9" fill="#1a1aff"/>
<rect x="166" y="828.7" width="1" height="0.8" fill="#1a1aff"/>
<rect x="170" y="826.4" width="1" height="3.1" fill="#1a1aff"/>
<rect x="174" y="825.9" width="1" height="3.6" fill="#1a1aff"/>
<rect x="178" y="818.4" width="1" height="11.1" fill="#1a1aff"/>
<rect x="182" y="808.6" width="1" height="20.9" fill="#1a1aff"/>
<rect x="186" y="806.6" width="1" height="22.9" fill="#1a1aff"/>
<rect x="190" y="806.0" width="1" height="23.5" fill="#1a1aff"/>
<rect x="194" y="805.4" width="1" height="24.1" fill="#1a1aff"/>
<rect x="198" y="808.9" width="1" height="20.6" fill="#1a1aff"/>
<rect x="202" y="810.8" width="1" height="18.7" fill="#1a1aff"/>
<rect x="206" y="812.1" width="1" height="17.4" fill="#1a1aff"/>
<rect x="210" y="815.0" width="1" height="14.5" fill="#1a1aff"/>
<rect x="214" y="818.6" width="1" height="10.9" fill="#1a1aff"/>
<rect x="218" y="817.7" width="1" height="11.8" fill="#1a1aff"/>
<rect x="222" y="814.4" width="1" height="15.1" fill="#1a1aff"/>
<rect x="226" y="811.1" width="1" height="18.4" fill="#1a1aff"/>
<rect x="230" y="812.6" width="1" height="16.9" fill="#1a1aff"/>
<rect x="234" y="814.0" width="1" height="15.5" fill="#1a1aff"/>
<rect x="238" y="820.1" width="1" height="9.4" fill="#1a1aff"/>
<rect x="242" y="822.2" width="1" height="7.3" fill="#1a1aff"/>
<rect x="246" y="823.4" width="1" height="6.1" fill="#1a1aff"/>
<rect x="250" y="824.5" width="1" height="5.0" fill="#1a1aff"/>
<rect x="254" y="825.7" width="1" height="3.8" fill="#1a1aff"/>
<rect x="258" y="829.5" width="1" height="2.1" fill="#1a1aff"/>
<rect x="262" y="829.5" width="1" height="7.2" fill="#1a1aff"/>
<rect x="266" y="829.5" width="1" height="12.8" fill="#1a1aff"/>
<rect x="270" y="829.5" width="1" height="19.2" fill="#1a1aff"/>
<rect x="274" y="829.5" width="1" height="25.6" fill="#1a1aff"/>
<rect x="278" y="829.5" width="1" height="28.4" fill="#1a1aff"/>
<rect x="282" y="829.5" width="1" height="26.4" fill="#1a1aff"/>
<rect x="286" y="829.5" width="1" height="23.1" fill="#1a1aff"/>
<rect x="290" y="829.5" width="1" height="19.1" fill="#1a1aff"/>
<rect x="294" y="829.5" width="1" height="15.6" fill="#1a1aff"/>
<rect x="298" y="829.5" width="1" height="13.4" fill="#1a1aff"/>
<rect x="302" y="829.5" width="1" height="9.5" fill="#1a1aff"/>
<rect x="306" y="829.5" width="1" height="5.6" fill="#1a1aff"/>
<rect x="310" y="829.5" width="1" height="3.8" fill="#1a1aff"/>
<rect x="314" y="829.5" width="1" height="1.8" fill="#1a1aff"/>
<rect x="322" y="828.8" width="1" height="0.7" fill="#1a1aff"/>
<rect x="326" y="828.8" width="1" height="0.7" fill="#1a1aff"/>
<rect x="338" y="828.7" width="1" height="0.8" fill="#1a1aff"/>
<rect x="342" y="827.3" width="1" height="2.2" fill="#1a1aff"/>
<rect x="346" y="825.8" width="1" height="3.7" fill="#1a1aff"/>
<rect x="350" y="826.1" width="1" height="3.4" fill="#1a1aff"/>
<rect x="354" y="827.9" width="1" height="1.6" fill="#1a1aff"/>
<rect x="362" y="829.5" width="1" height="3.0" fill="#1a1aff"/>
<rect x="366" y="829.5" width="1" height="5.8" fill="#1a1aff"/>
<rect x="370" y="829.5" width="1" height="7.4" fill="#1a1aff"/>
<rect x="374" y="829.5" width="1" height="6.1" fill="#1a1aff"/>
<rect x="378" y="829.5" width="1" height="5.3" fill="#1a1aff"/>
<rect x="382" y="829.5" width="1" height="4.5" fill="#1a1aff"/>
<rect x="386" y="829.5" width="1" height="3.7" fill="#1a1aff"/>
<rect x="390" y="829.5" width="1" height="2.9" fill="#1a1aff"/>
<rect x="394" y="829.5" width="1" height="2.1" fill="#1a1aff"/>
<rect x="398" y="829.5" width="1" height="1.9" fill="#1a1aff"/>
<rect x="402" y="829.5" width="1" height="2.4" fill="#1a1aff"/>
<rect x="406" y="829.5" width="1" height="2.7" fill="#1a1aff"/>
<rect x="410" y="829.5" width="1" height="3.0" fill="#1a1aff"/>
<rect x="414" y="829.5" width="1" height="3.2" fill="#1a1aff"/>
<rect x="418" y="829.5" width="1" height="3.4" fill="#1a1aff"/>
<rect x="422" y="829.5" width="1" height="4.0" fill="#1a1aff"/>
<rect x="426" y="829.5" width="1" height="4.9" fill="#1a1aff"/>
<rect x="430" y="829.5" width="1" height="4.4" fill="#1a1aff"/>
<rect x="434" y="829.5" width="1" height="3.5" fill="#1a1aff"/>
<rect x="438" y="829.5" width="1" height="2.6" fill="#1a1aff"/>
<rect x="442" y="829.5" width="1" height="1.7" fill="#1a1aff"/>
<rect x="446" y="829.5" width="1" height="1.3" fill="#1a1aff"/>
<rect x="450" y="829.5" width="1" height="1.2" fill="#1a1aff"/>
<rect x="454" y="829.5" width="1" height="1.0" fill="#1a1aff"/>
<rect x="458" y="829.5" width="1" height="0.8" fill="#1a1aff"/>
<rect x="462" y="829.5" width="1" height="1.4" fill="#1a1aff"/>
<rect x="466" y="829.5" width="1" height="2.3" fill="#1a1aff"/>
<rect x="470" y="829.5" width="1" height="3.2" fill="#1a1aff"/>
<rect x="474" y="829.5" width="1" height="4.0" fill="#1a1aff"/>
<rect x="478" y="829.5" width="1" height="4.9" fill="#1a1aff"/>
<rect x="482" y="829.5" width="1" height="3.8" fill="#1a1aff"/>
<rect x="486" y="829.5" width="1" height="2.6" fill="#1a1aff"/>
<rect x="490" y="829.5" width="1" height="1.2" fill="#1a1aff"/>
<rect x="494" y="828.9" width="1" height="0.6" fill="#1a1aff"/>
<rect x="498" y="827.5" width="1" height="2.0" fill="#1a1aff"/>
<rect x="502" y="827.9" width="1" height="1.6" fill="#1a1aff"/>
<rect x="506" y="827.8" width="1" height="1.7" fill="#1a1aff"/>
<rect x="510" y="827.6" width="1" height="1.9" fill="#1a1aff"/>
<rect x="514" y="827.6" width="1" height="1.9" fill="#1a1aff"/>
<rect x="518" y="827.5" width="1" height="2.0" fill="#1a1aff"/>
<rect x="522" y="827.3" width="1" height="2.2" fill="#1a1aff"/>
<rect x="526" y="827.4" width="1" height="2.1" fill="#1a1aff"/>
<rect x="530" y="828.4" width="1" height="1.1" fill="#1a1aff"/>
<rect x="538" y="829.5" width="1" height="1.1" fill="#1a1aff"/>
<rect x="542" y="829.5" width="1" height="3.2" fill="#1a1aff"/>
<rect x="546" y="829.5" width="1" height="5.2" fill="#1a1aff"/>
<rect x="550" y="829.5" width="1" height="8.1" fill="#1a1aff"/>
<rect x="554" y="829.5" width="1" height="13.0" fill="#1a1aff"/>
<rect x="558" y="829.5" width="1" height="15.6" fill="#1a1aff"/>
<rect x="562" y="829.5" width="1" height="17.3" fill="#1a1aff"/>
<rect x="566" y="829.5" width="1" height="17.1" fill="#1a1aff"/>
<rect x="570" y="829.5" width="1" height="17.0" fill="#1a1aff"/>
<rect x="574" y="829.5" width="1" height="17.8" fill="#1a1aff"/>
<rect x="578" y="829.5" width="1" height="20.1" fill="#1a1aff"/>
<rect x="582" y="829.5" width="1" height="22.4" fill="#1a1aff"/>
<rect x="586" y="829.5" width="1" height="23.4" fill="#1a1aff"/>
<rect x="590" y="829.5" width="1" height="23.3" fill="#1a1aff"/>
<rect x="594" y="829.5" width="1" height="22.9" fill="#1a1aff"/>
<rect x="598" y="829.5" width="1" height="20.7" fill="#1a1aff"/>
<rect x="602" y="829.5" width="1" height="18.5" fill="#1a1aff"/>
<rect x="606" y="829.5" width="1" height="15.9" fill="#1a1aff"/>
<rect x="610" y="829.5" width="1" height="12.9" fill="#1a1aff"/>
<rect x="614" y="829.5" width="1" height="10.8" fill="#1a1aff"/>
<rect x="618" y="829.5" width="1" height="7.8" fill="#1a1aff"/>
<rect x="622" y="829.5" width="1" height="2.8" fill="#1a1aff"/>
<rect x="630" y="828.9" width="1" height="0.6" fill="#1a1aff"/>
<rect x="634" y="828.3" width="1" height="1.2" fill="#1a1aff"/>
<rect x="638" y="827.6" width="1" height="1.9" fill="#1a1aff"/>
<rect x="642" y="827.9" width="1" height="1.6" fill="#1a1aff"/>
<rect x="646" y="828.3" width="1" height="1.2" fill="#1a1aff"/>
<rect x="650" y="828.6" width="1" height="0.9" fill="#1a1aff"/>
<rect x="654" y="829.5" width="1" height="2.0" fill="#1a1aff"/>
<rect x="658" y="829.5" width="1" height="1.6" fill="#1a1aff"/>
<rect x="662" y="829.5" width="1" height="0.6" fill="#1a1aff"/>
<rect x="666" y="827.7" width="1" height="1.8" fill="#1a1aff"/>
<rect x="670" y="826.6" width="1" height="2.9" fill="#1a1aff"/>
<rect x="674" y="825.5" width="1" height="4.0" fill="#1a1aff"/>
<rect x="678" y="821.0" width="1" height="8.5" fill="#1a1aff"/>
<rect x="682" y="817.9" width="1" height="11.6" fill="#1a1aff"/>
<rect x="686" y="814.8" width="1" height="14.7" fill="#1a1aff"/>
<rect x="690" y="811.7" width="1" height="17.8" fill="#1a1aff"/>
<rect x="694" y="810.3" width="1" height="19.2" fill="#1a1aff"/>
<rect x="698" y="809.5" width="1" height="20.0" fill="#1a1aff"/>
<rect x="702" y="809.5" width="1" height="20.0" fill="#1a1aff"/>
<rect x="706" y="809.5" width="1" height="20.0" fill="#1a1aff"/>
<rect x="710" y="810.9" width="1" height="18.6" fill="#1a1aff"/>
<rect x="714" y="812.8" width="1" height="16.7" fill="#1a1aff"/>
<rect x="718" y="813.6" width="1" height="15.9" fill="#1a1aff"/>
<rect x="722" y="813.5" width="1" height="16.0" fill="#1a1aff"/>
<rect x="726" y="814.0" width="1" height="15.5" fill="#1a1aff"/>
<rect x="730" y="814.7" width="1" height="14.8" fill="#1a1aff"/>
<rect x="734" y="815.4" width="1" height="14.1" fill="#1a1aff"/>
<rect x="738" y="814.5" width="1" height="15.0" fill="#1a1aff"/>
<rect x="742" y="813.2" width="1" height="16.3" fill="#1a1aff"/>
<rect x="746" y="812.0" width="1" height="17.5" fill="#1a1aff"/>
<rect x="750" y="813.8" width="1" height="15.7" fill="#1a1aff"/>
<rect x="754" y="816.2" width="1" height="13.3" fill="#1a1aff"/>
<rect x="758" y="818.5" width="1" height="11.0" fill="#1a1aff"/>
<rect x="762" y="820.0" width="1" height="9.5" fill="#1a1aff"/>
<rect x="766" y="820.8" width="1" height="8.7" fill="#1a1aff"/>
<rect x="770" y="821.4" width="1" height="8.1" fill="#1a1aff"/>
<rect x="774" y="822.0" width="1" height="7.5" fill="#1a1aff"/>
<rect x="778" y="825.3" width="1" height="4.2" fill="#1a1aff"/>
<rect x="782" y="827.7" width="1" height="1.8" fill="#1a1aff"/>
<rect x="802" y="829.5" width="1" height="0.5" fill="#1a1aff"/>
<rect x="806" y="829.5" width="1" height="1.8" fill="#1a1aff"/>
<rect x="810" y="829.5" width="1" height="3.0" fill="#1a1aff"/>
<rect x="814" y="829.5" width="1" height="3.7" fill="#1a1aff"/>
<rect x="818" y="829.5" width="1" height="3.6" fill="#1a1aff"/>
<rect x="822" y="829.5" width="1" height="3.4" fill="#1a1aff"/>
<rect x="826" y="829.5" width="1" height="3.2" fill="#1a1aff"/>
<rect x="830" y="829.5" width="1" height="3.4" fill="#1a1aff"/>
<rect x="834" y="829.5" width="1" height="4.2" fill="#1a1aff"/>
<rect x="838" y="829.5" width="1" height="5.0" fill="#1a1aff"/>
<rect x="842" y="829.5" width="1" height="5.1" fill="#1a1aff"/>
<rect x="846" y="829.5" width="1" height="5.2" fill="#1a1aff"/>
<rect x="850" y="829.5" width="1" height="5.2" fill="#1a1aff"/>
<rect x="854" y="829.5" width="1" height="5.3" fill="#1a1aff"/>
<rect x="858" y="829.5" width="1" height="3.8" fill="#1a1aff"/>
<rect x="862" y="829.5" width="1" height="3.2" fill="#1a1aff"/>
<rect x="866" y="829.5" width="1" height="3.0" fill="#1a1aff"/>
<rect x="870" y="829.5" width="1" height="2.1" fill="#1a1aff"/>
<rect x="874" y="829.5" width="1" height="1.1" fill="#1a1aff"/>
<rect x="890" y="829.5" width="1" height="0.8" fill="#1a1aff"/>
<rect x="894" y="829.5" width="1" height="1.3" fill="#1a1aff"/>
<rect x="898" y="829.5" width="1" height="1.0" fill="#1a1aff"/>
<rect x="902" y="829.5" width="1" height="0.8" fill="#1a1aff"/>
<rect x="906" y="829.5" width="1" height="0.6" fill="#1a1aff"/>
<rect x="918" y="829.5" width="1" height="3.4" fill="#1a1aff"/>
<rect x="922" y="829.5" width="1" height="8.3" fill="#1a1aff"/>
<rect x="926" y="829.5" width="1" height="10.9" fill="#1a1aff"/>
<rect x="930" y="829.5" width="1" height="9.2" fill="#1a1aff"/>
<rect x="934" y="829.5" width="1" height="7.5" fill="#1a1aff"/>
<rect x="938" y="829.5" width="1" height="6.3" fill="#1a1aff"/>
<rect x="942" y="829.5" width="1" height="8.8" fill="#1a1aff"/>
<rect x="946" y="829.5" width="1" height="11.3" fill="#1a1aff"/>
<rect x="950" y="829.5" width="1" height="12.5" fill="#1a1aff"/>
<rect x="954" y="829.5" width="1" height="8.7" fill="#1a1aff"/>
<rect x="958" y="829.5" width="1" height="4.9" fill="#1a1aff"/>
<rect x="962" y="829.5" width="1" height="3.2" fill="#1a1aff"/>
<rect x="970" y="825.4" width="1" height="4.1" fill="#1a1aff"/>
<rect x="974" y="824.1" width="1" height="5.4" fill="#1a1aff"/>
<rect x="978" y="825.0" width="1" height="4.5" fill="#1a1aff"/>
<rect x="982" y="826.7" width="1" height="2.8" fill="#1a1aff"/>
<rect x="986" y="828.4" width="1" height="1.1" fill="#1a1aff"/>
<rect x="998" y="829.0" width="1" height="0.5" fill="#1a1aff"/>
<rect x="1002" y="827.8" width="1" height="1.7" fill="#1a1aff"/>
<rect x="1006" y="826.7" width="1" height="2.8" fill="#1a1aff"/>
<rect x="1010" y="823.2" width="1" height="6.3" fill="#1a1aff"/>
<rect x="1014" y="819.3" width="1" height="10.2" fill="#1a1aff"/>
<rect x="1018" y="817.2" width="1" height="12.3" fill="#1a1aff"/>
<rect x="1022" y="818.4" width="1" height="11.1" fill="#1a1aff"/>
<rect x="1026" y="818.2" width="1" height="11.3" fill="#1a1aff"/>
<rect x="1030" y="819.5" width="1" height="10.0" fill="#1a1aff"/>
<rect x="1034" y="821.7" width="1" height="7.8" fill="#1a1aff"/>
<rect x="1038" y="823.7" width="1" height="5.8" fill="#1a1aff"/>
<rect x="1042" y="825.7" width="1" height="3.8" fill="#1a1aff"/>
<rect x="1046" y="827.0" width="1" height="2.5" fill="#1a1aff"/>
<rect x="1050" y="827.1" width="1" height="2.4" fill="#1a1aff"/>
<rect x="1054" y="827.1" width="1" height="2.4" fill="#1a1aff"/>
<rect x="1058" y="826.5" width="1" height="3.0" fill="#1a1aff"/>
<rect x="1062" y="825.2" width="1" height="4.3" fill="#1a1aff"/>
<rect x="1066" y="823.9" width="1" height="5.6" fill="#1a1aff"/>
<rect x="1070" y="820.7" width="1" height="8.8" fill="#1a1aff"/>
<rect x="1074" y="816.7" width="1" height="12.8" fill="#1a1aff"/>
<rect x="1078" y="813.4" width="1" height="16.1" fill="#1a1aff"/>
<rect x="1082" y="812.5" width="1" height="17.0" fill="#1a1aff"/>
<rect x="1086" y="811.5" width="1" height="18.0" fill="#1a1aff"/>
<rect x="1090" y="813.1" width="1" height="16.4" fill="#1a1aff"/>
<rect x="1094" y="816.0" width="1" height="13.5" fill="#1a1aff"/>
<rect x="1098" y="817.8" width="1" height="11.7" fill="#1a1aff"/>
<rect x="1102" y="819.7" width="1" height="9.8" fill="#1a1aff"/>
<rect x="1106" y="818.4" width="1" height="11.1" fill="#1a1aff"/>
<rect x="1110" y="819.5" width="1" height="10.0" fill="#1a1aff"/>
<rect x="1114" y="821.8" width="1" height="7.7" fill="#1a1aff"/>
<rect x="1118" y="824.0" width="1" height="5.5" fill="#1a1aff"/>
<rect x="1122" y="826.4" width="1" height="3.1" fill="#1a1aff"/>
<rect x="1126" y="829.5" width="1" height="0.7" fill="#1a1aff"/>
<rect x="1130" y="829.5" width="1" height="2.6" fill="#1a1aff"/>
<rect x="1134" y="829.5" width="1" height="5.3" fill="#1a1aff"/>
<rect x="1138" y="829.5" width="1" height="7.9" fill="#1a1aff"/>
<rect x="1142" y="829.5" width="1" height="9.4" fill="#1a1aff"/>
<rect x="1146" y="829.5" width="1" height="9.9" fill="#1a1aff"/>
<rect x="1150" y="829.5" width="1" height="10.8" fill="#1a1aff"/>
<rect x="1154" y="829.5" width="1" height="12.3" fill="#1a1aff"/>
<rect x="1158" y="829.5" width="1" height="13.6" fill="#1a1aff"/>
<rect x="1162" y="829.5" width="1" height="12.9" fill="#1a1aff"/>
<rect x="1166" y="829.5" width="1" height="11.4" fill="#1a1aff"/>
<rect x="1170" y="829.5" width="1" height="11.5" fill="#1a1aff"/>
<rect x="1174" y="829.5" width="1" height="12.2" fill="#1a1aff"/>
<rect x="1178" y="829.5" width="1" height="12.2" fill="#1a1aff"/>
<rect x="1182" y="829.5" width="1" height="10.7" fill="#1a1aff"/>
<rect x="1186" y="829.5" width="1" height="9.3" fill="#1a1aff"/>
<rect x="1190" y="829.5" width="1" height="7.0" fill="#1a1aff"/>
<rect x="1194" y="829.5" width="1" height="4.8" fill="#1a1aff"/>
<rect x="1198" y="829.5" width="1" height="3.7" fill="#1a1aff"/>
<rect x="1202" y="829.5" width="1" height="4.5" fill="#1a1aff"/>
<rect x="1206" y="829.5" width="1" height="5.3" fill="#1a1aff"/>
<rect x="1210" y="829.5" width="1" height="4.2" fill="#1a1aff"/>
<rect x="1214" y="829.5" width="1" height="2.7" fill="#1a1aff"/>
<rect x="1218" y="829.5" width="1" height="0.9" fill="#1a1aff"/>
<rect x="1222" y="828.5" width="1" height="1.0" fill="#1a1aff"/>
<polyline points="134.5,829.6 138.8,829.9 145.0,830.4 152.3,831.0 159.6,831.6 166.1,831.9 170.9,832.0 173.7,831.9 175.1,831.8 175.7,831.6 176.0,831.0 176.5,830.0 177.9,828.4 180.0,826.1 182.4,823.1 185.1,819.6 188.0,815.9 191.1,812.1 194.3,808.5 197.8,804.9 201.7,801.2 205.7,797.4 209.8,793.5 213.9,789.8 217.7,786.2 221.4,782.6 225.1,778.8 228.7,775.2 232.2,771.7 235.6,768.7 238.8,766.3 241.9,764.5 244.9,763.3 247.7,762.5 250.4,762.0 252.9,761.7 255.2,761.6 257.1,761.4 258.5,761.3 259.8,761.4 261.0,761.9 262.6,763.1 264.6,765.2 267.2,768.6 270.1,773.1 273.3,778.3 276.6,783.7 280.0,788.9 283.4,793.3 286.8,797.2 290.2,800.9 293.7,804.3 297.2,807.4 300.8,810.0 304.5,812.0 308.2,813.2 311.9,813.8 315.6,813.9 319.5,813.7 323.6,813.4 327.9,813.2 332.8,813.0 338.2,812.6 343.7,812.1 349.2,811.7 354.2,811.5 358.4,811.6 361.5,812.1 363.6,812.9 365.3,813.9 367.0,815.0 369.2,816.2 372.4,817.2 377.0,818.2 382.6,819.2 388.7,820.3 394.9,821.3 400.6,822.3 405.2,823.3 408.6,824.2 411.1,825.1 413.2,825.9 415.1,826.7 417.2,827.6 420.0,828.5 423.5,829.5 427.5,830.7 431.7,831.9 436.0,833.0 439.9,834.0 443.4,834.8 446.1,835.3 448.3,835.4 450.2,835.5 452.1,835.5 454.4,835.7 457.5,836.2 461.5,837.1 466.3,838.3 471.4,839.7 476.6,841.0 481.4,842.1 485.6,842.6 489.0,842.6 491.8,842.1 494.4,841.3 496.8,840.4 499.3,839.6 502.0,839.0 505.0,838.6 508.2,838.2 511.4,837.8 514.6,837.5 517.8,837.3 520.8,837.2 523.7,837.1 526.4,837.0 529.1,837.0 531.8,837.1 534.5,837.4 537.2,837.9 539.8,838.4 542.1,838.9 544.5,839.5 547.1,840.5 550.1,842.2 553.6,844.9 557.9,848.8 563.0,853.8 568.4,859.4 573.9,865.4 579.2,871.2 584.0,876.5 588.4,881.5 592.7,886.5 596.8,891.5 600.6,896.1 604.2,900.1 607.5,903.5 610.3,906.1 612.7,908.0 614.8,909.4 616.8,910.4 619.0,911.2 621.5,911.7 624.4,911.9 627.6,911.6 630.9,911.0 634.2,910.3 637.4,909.7 640.3,909.4 643.0,909.4 645.4,909.5 647.8,909.7 650.1,910.0 652.2,910.3 654.4,910.5 656.5,910.8 658.4,911.2 660.3,911.5 662.2,911.8 664.1,911.9 666.0,911.7 667.9,911.3 669.7,910.7 671.5,909.9 673.3,908.9 675.4,907.5 677.8,905.8 680.5,903.6 683.5,901.0 686.7,898.1 690.0,895.0 693.3,891.7 696.5,888.3 699.7,884.6 703.0,880.6 706.2,876.5 709.5,872.3 712.8,868.4 716.0,864.8 719.1,861.7 722.2,858.9 725.2,856.3 728.3,853.8 731.5,851.2 734.7,848.4 738.0,845.3 741.5,842.0 745.0,838.6 748.5,835.4 752.1,832.3 755.8,829.7 759.5,827.4 763.2,825.3 767.0,823.5 770.9,821.9 775.0,820.7 779.3,819.8 784.0,819.4 789.0,819.4 794.2,819.7 799.5,820.2 804.7,820.8 809.7,821.5 814.6,822.2 819.5,823.0 824.4,824.0 829.1,825.0 833.6,826.1 837.9,827.3 841.4,828.6 844.2,830.1 846.7,831.7 849.6,833.2 853.5,834.5 859.0,835.5 866.7,835.9 876.3,835.8 887.0,835.5 897.6,835.3 907.3,835.4 915.2,836.2 921.1,837.7 925.6,839.8 929.2,842.3 932.4,844.9 935.3,847.4 938.6,849.6 942.0,851.6 945.3,853.6 948.4,855.6 951.5,857.3 954.5,858.7 957.4,859.7 960.1,860.2 962.4,860.2 964.7,860.0 967.2,859.5 970.1,858.9 973.8,858.3 978.7,857.6 984.6,856.6 991.0,855.6 997.2,854.5 1002.6,853.4 1006.6,852.6 1008.8,852.0 1009.6,851.6 1009.6,851.3 1009.3,851.0 1009.3,850.4 1010.0,849.5 1011.4,848.1 1013.2,846.4 1015.1,844.5 1017.3,842.6 1019.4,840.7 1021.6,839.1 1023.7,837.7 1025.8,836.4 1028.0,835.1 1030.3,834.0 1032.8,833.0 1035.5,832.2 1038.6,831.7 1042.2,831.5 1045.9,831.5 1049.6,831.4 1053.2,830.9 1056.3,829.9 1058.9,828.3 1061.1,826.4 1063.1,824.1 1065.1,821.5 1067.4,818.8 1070.2,816.0 1073.5,812.9 1077.1,809.5 1081.0,805.8 1085.1,802.2 1089.2,798.7 1093.3,795.6 1097.6,792.7 1102.3,789.8 1107.0,787.1 1111.5,784.8 1115.5,782.8 1118.7,781.3 1120.7,780.3 1121.6,779.6 1122.1,779.3 1122.5,779.5 1123.5,780.3 1125.7,781.7 1129.2,784.0 1133.6,787.1 1138.6,790.8 1143.8,794.7 1148.9,798.6 1153.5,802.1 1157.7,805.4 1161.7,808.8 1165.6,812.1 1169.4,815.3 1173.1,818.1 1176.6,820.6 1179.8,822.6 1182.8,824.2 1185.6,825.6 1188.5,826.7 1191.6,827.7 1195.1,828.7 1199.5,829.6 1204.6,830.3 1209.9,831.0 1215.0,831.5 1219.3,831.9 1222.4,832.2" fill="none" stroke="#ffff20" stroke-width="1.1" stroke-linejoin="round" stroke-linecap="round" />
<polyline points="134.5,829.6 142.7,833.1 154.5,833.1 159.2,835.0 166.2,830.8 175.6,826.0 182.6,800.3 194.3,784.4 199.0,784.4 207.2,779.2 215.4,778.7 226.0,760.0 234.1,755.3 238.8,758.1 254.0,758.1 264.6,775.7 276.3,812.0 283.4,819.0 292.7,817.9 299.8,820.2 311.5,815.5 318.5,812.0 327.9,812.5 334.9,813.2 347.8,807.8 358.4,812.0 368.9,823.7 395.9,823.3 405.2,826.0 420.0,832.0 427.0,835.5 443.4,836.2 458.7,837.2 478.6,846.0 486.8,845.0 497.3,838.0 511.4,836.2 524.3,834.8 537.2,838.6 548.9,849.6 560.6,869.5 572.3,881.2 584.0,900.0 593.4,910.5 605.1,917.6 616.9,918.3 626.2,911.2 639.1,907.5 650.8,909.4 654.4,912.9 663.7,911.7 674.3,903.5 690.7,875.4 707.1,855.5 715.3,849.6 723.0,842.6 734.7,834.4 746.5,820.3 753.5,818.0 762.9,817.5 774.6,814.4 786.3,820.3 800.4,821.0 814.4,826.2 828.5,828.5 854.3,839.0 866.0,838.6 880.0,835.5 894.1,837.2 915.2,836.2 924.6,853.1 937.5,855.0 948.0,867.2 950.4,868.4 962.1,862.5 971.4,853.1 976.1,852.6 987.9,855.5 994.9,855.0 1006.6,849.6 1016.0,832.0 1018.1,829.9 1027.4,824.8 1035.5,825.2 1044.7,828.7 1056.3,827.5 1066.7,813.7 1077.1,794.0 1087.5,782.4 1102.5,780.8 1107.2,776.2 1119.9,776.2 1128.0,784.7 1139.6,800.9 1148.8,809.0 1159.2,820.6 1167.3,824.1 1176.6,833.3 1185.8,834.0 1197.4,832.6 1206.7,835.6 1213.6,834.0 1222.4,831.0" fill="none" stroke="#ff0000" stroke-width="2.3" stroke-linejoin="round" stroke-linecap="round" />
<line x1="617" y1="921.5" x2="1022.7" y2="858.8" stroke="#ffff80" stroke-width="1.3"/>
</svg>
<!-- tabs / scrollbar row -->
<div class="a" style="left:124px;top:945px;width:1154px;height:21px;background:#ECE9D8"></div>

<div class="a" style="left:124px;top:944px;width:1104px;height:1px;background:#000"></div>
<div class="a" style="left:124px;top:945px;width:1px;height:21px;background:#000"></div>
<div class="a" style="left:125px;top:945px;width:1153px;height:1px;background:#fff"></div>
<div class="a" style="left:125px;top:965px;width:1153px;height:1px;background:#8a8878"></div>
<svg class="a" style="left:125px;top:946px" width="80" height="19">
 <path d="M0.5,0 v19 M20.5,0 v19 M40.5,0 v19 M60.5,0 v19" stroke="#fff" stroke-width="1"/>
 <path d="M19.5,0 v19 M39.5,0 v19 M59.5,0 v19 M79.5,0 v19" stroke="#c5c2b2" stroke-width="1"/>
 <g fill="#aca899"><rect x="4" y="2" width="1.5" height="15"/><path d="M14,2 L6,9.5 L14,17 Z"/><path d="M34,2 L26,9.5 L34,17 Z"/><path d="M46,2 L54,9.5 L46,17 Z"/><path d="M66,2 L74,9.5 L66,17 Z"/><rect x="75" y="2" width="1.5" height="15"/></g>
</svg>
<svg class="a" style="left:204px;top:945px" width="86" height="21"><path d="M1,0 L11.3,20.5 L75.4,20.5 L84.75,0 Z" fill="#fff"/><path d="M1,0 L11.3,20.5 M75.4,20.5 L84.75,0" stroke="#000" stroke-width="1.1" fill="none"/></svg>
<div class="a" style="left:222px;top:946px;font:15px 'Liberation Sans',sans-serif;color:#000;letter-spacing:0.8px">Sheet1</div>
<div class="a" style="left:290px;top:946px;width:3px;height:19px;background:#ECE9D8;border-left:1px solid #c5c2b2"></div>
<div class="a" style="left:293px;top:946px;width:22px;height:19px;background:#ECE9D8;border-left:1px solid #fff;border-right:1px solid #8a8878;border-bottom:1px solid #8a8878"></div>
<svg class="a" style="left:299px;top:950px" width="10" height="12"><path d="M7.5,1 L1.5,6 L7.5,11 Z" fill="#000"/></svg>
<div class="a" style="left:315px;top:946px;width:439px;height:19px;background:repeating-conic-gradient(#f4f3ee 0 25%,#e2dfd0 0 50%) 0 0/2px 2px"></div>
<div class="a" style="left:754px;top:946px;width:503px;height:19px;background:#ECE9D8;border-bottom:1px solid #716f64"></div>
<div class="a" style="left:1256px;top:946px;width:2px;height:19px;background:#fff;border-left:1px solid #8a8878"></div>
<div class="a" style="left:1258px;top:946px;width:20px;height:19px;background:#ECE9D8;border-right:1px solid #8a8878;border-bottom:1px solid #716f64"></div>
<svg class="a" style="left:1263px;top:950px" width="10" height="12"><path d="M2,1 L8,6 L2,11 Z" fill="#000"/></svg>

<!-- status bar -->
<div class="a" style="left:0;top:966px;width:1280px;height:1px;background:#fff"></div>
<div class="a status" style="left:2px;top:972px">Ready</div>

<div class="a sbox" style="left:768px;width:173px"></div>
<div class="a status" style="left:770px;top:971px">Remaining minutes: 6</div>
<div class="a sbox" style="left:944px;width:21px"></div>
<div class="a status" style="left:946px;top:971px">14</div>
<svg class="a" style="left:966px;top:970px" width="18" height="18"><rect x="3" y="1" width="11" height="9" fill="#5a9ae0" stroke="#2a4a90"/><rect x="6" y="10" width="5" height="3" fill="#888"/><rect x="1" y="13" width="16" height="2" fill="#3a6ac0"/><rect x="7" y="12" width="5" height="5" fill="#f0c020"/></svg>
<div class="a sbox" style="left:986px;width:53px"></div>
<div class="a status" style="left:988px;top:971px">Page 1</div>
<div class="a sbox" style="left:1042px;width:48px"></div>
<div class="a status" style="left:1043px;top:971px">LOCAL</div>
<div class="a sbox" style="left:1090px;width:181px"></div>
<div class="a status" style="left:1091px;top:971px">E-</div>
<div class="a status" style="left:1179px;top:971px">configured.</div>
<div class="a" style="left:1103px;top:960px;width:81px;height:34px;background:#2455d4;border:1px solid #5a8af0;border-bottom:none"></div>
<div class="a" style="left:1107px;top:964px;width:2px;height:22px;border-left:2px dotted #9ac0ff"></div>
<div class="a" style="left:1116px;top:966px;width:20px;height:18px;background:#3a6ae0"></div>
<div class="a" style="left:1117px;top:966px;font:13.33px 'Liberation Serif',serif;color:#fff">EN</div>
<svg class="a" style="left:1142px;top:965px" width="20" height="20"><rect x="1.5" y="1" width="17" height="16" rx="3" fill="#ffee60" stroke="#000" stroke-width="1.5"/><path d="M5,18 L8,15 L10,15 Z" fill="#000"/><text x="9" y="13.5" font-family="Liberation Sans" font-weight="bold" font-size="13" text-anchor="middle" fill="#001080">?</text></svg>
<div class="a" style="left:1172px;top:967px;width:5px;height:2px;background:#fff"></div>
<svg class="a" style="left:1170px;top:977px" width="9" height="6"><path d="M1,1 L8,1 L4.5,5 Z" fill="#fff"/></svg>

<div class="a" style="left:0;top:990px;width:1280px;height:4px;background:linear-gradient(#3a80f0,#2a62d8)"></div>
<div class="a" style="left:0;top:990px;width:109px;height:4px;background:#3a9a3a"></div>
</body></html>
